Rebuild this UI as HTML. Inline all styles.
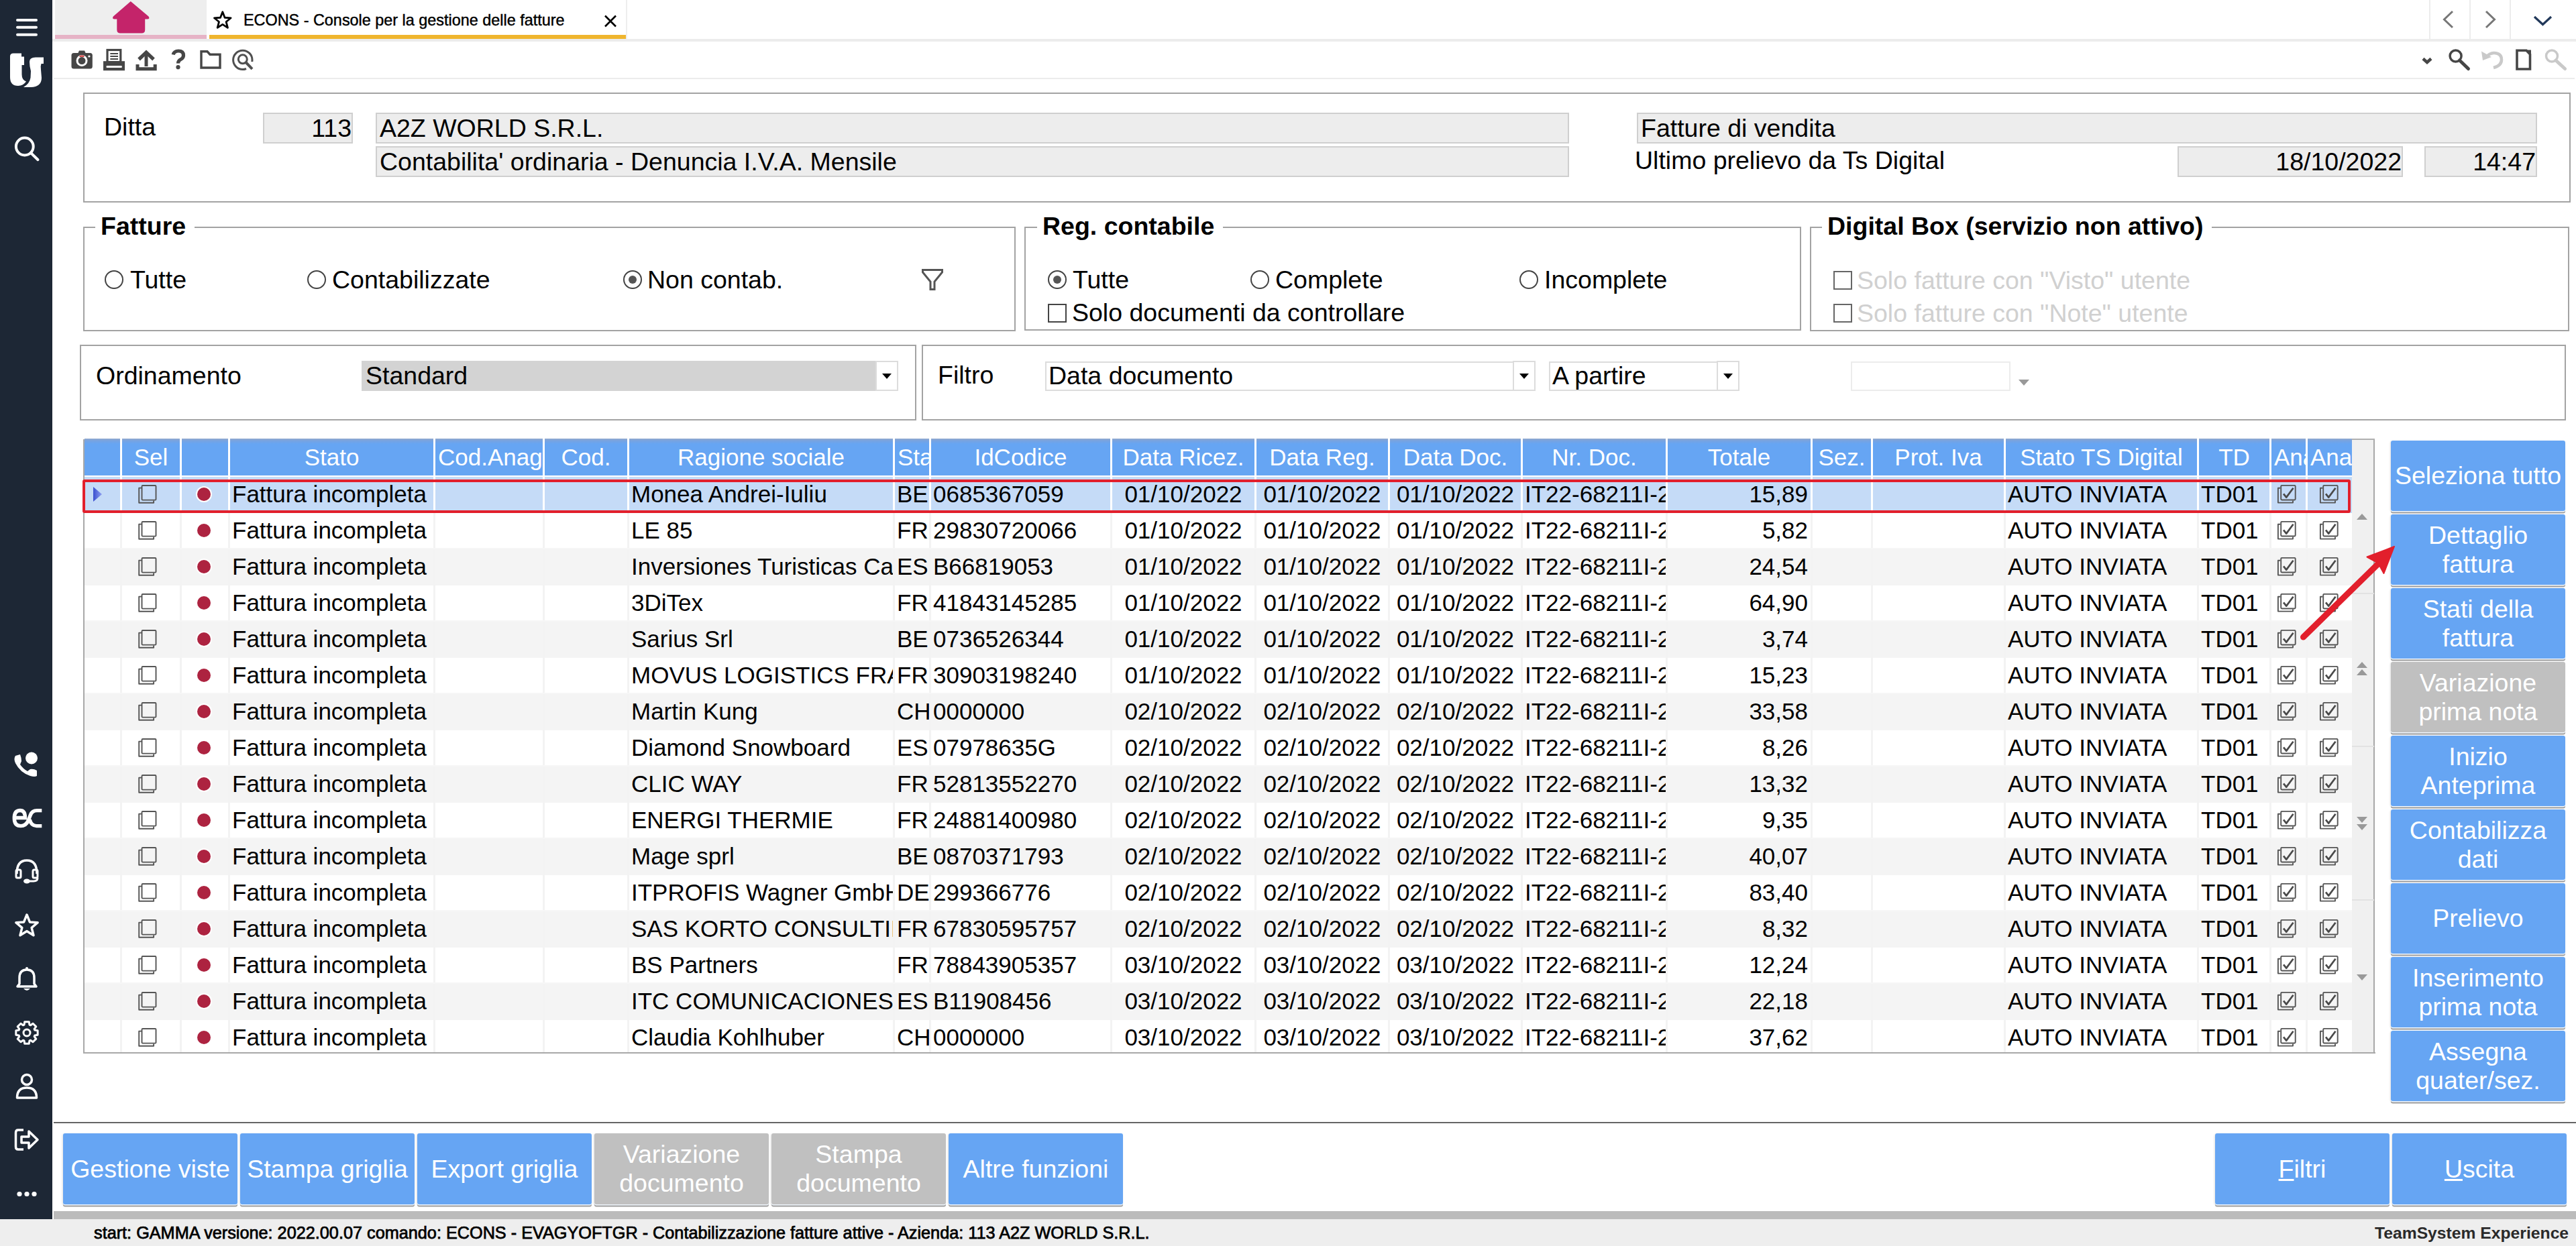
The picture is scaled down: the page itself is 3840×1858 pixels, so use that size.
<!DOCTYPE html><html><head><meta charset="utf-8"><style>
*{box-sizing:border-box;margin:0;padding:0}
html,body{width:3840px;height:1858px;overflow:hidden;background:#fff;font-family:"Liberation Sans", sans-serif;color:#000}
.a{position:absolute}
.t{position:absolute;white-space:nowrap;line-height:1}
.fld{position:absolute;background:#ededed;border:2px solid #cfcfcf;font-size:37.5px;line-height:42px;padding:0 4px;white-space:nowrap;overflow:hidden}
.box{position:absolute;border:2px solid #a3a3a3}
.lg{position:absolute;background:#fff;font-weight:bold;font-size:37.5px;line-height:1;padding:0 13px 0 8px;white-space:nowrap}
.rad{position:absolute;width:28px;height:28px;border:2px solid #444;border-radius:50%;background:#fff}
.rad.on::after{content:'';position:absolute;left:6px;top:6px;width:12px;height:12px;border-radius:50%;background:#555}
.chk{position:absolute;width:28px;height:28px;border:2px solid #444;background:#fff}
.lbl{position:absolute;font-size:37.5px;line-height:1;white-space:nowrap}
.hc{position:absolute;top:654px;height:55px;background:#66a5f3;color:#fff;font-size:35px;line-height:56px;text-align:center;white-space:nowrap;overflow:hidden;background-image:linear-gradient(#93a9cc,#78a3e0 3px,#66a5f3 8px)}
.row{position:absolute;left:126px;width:3380px;height:54px}
.c{position:absolute;top:0;height:54px;font-size:35px;line-height:51px;white-space:nowrap;overflow:hidden;padding-left:3px}
.btn{position:absolute;background:#66a5f3;color:#fff;border-radius:3px;font-size:37.5px;line-height:43px;text-align:center;display:flex;align-items:center;justify-content:center;box-shadow:0 1.5px 0 #f2f8ff,0 3.5px 0 #9d9d9d,-1px 1px 3px rgba(0,0,0,.12)}
.btn.g{background:#c0c0c0}
</style></head><body><div class="a" style="left:0;top:0;width:78px;height:1818px;background:#1d2735"></div>
<div class="a" style="left:78px;top:58px;width:3762px;height:4px;background:#ececec"></div>
<div class="a" style="left:82px;top:0;width:226px;height:52px;background:#eeeeee"></div>
<div class="a" style="left:82px;top:52px;width:226px;height:6px;background:#e6b3c6"></div>
<div class="a" style="left:312px;top:52px;width:621px;height:6px;background:#efb52e"></div>
<div class="t" style="left:363px;top:19px;font-size:23.4px;color:#000;-webkit-text-stroke:0.45px #000">ECONS - Console per la gestione delle fatture</div>
<div class="a" style="left:933px;top:0;width:2px;height:58px;background:#eeeeee"></div>
<div class="a" style="left:3621px;top:0;width:2px;height:58px;background:#ececec"></div>
<div class="a" style="left:3681px;top:0;width:2px;height:58px;background:#ececec"></div>
<div class="a" style="left:3741px;top:0;width:2px;height:58px;background:#ececec"></div>
<div class="a" style="left:80px;top:116px;width:3758px;height:2px;background:#ececec"></div>
<div class="box" style="left:124px;top:138px;width:3708px;height:164px"></div>
<div class="lbl" style="left:155px;top:171px">Ditta</div>
<div class="fld" style="left:392px;top:168px;width:134px;height:46px;text-align:right;padding-right:0">113</div>
<div class="fld" style="left:560px;top:168px;width:1779px;height:46px">A2Z WORLD S.R.L.</div>
<div class="fld" style="left:560px;top:218px;width:1779px;height:46px">Contabilita' ordinaria - Denuncia I.V.A. Mensile</div>
<div class="fld" style="left:2440px;top:168px;width:1342px;height:46px">Fatture di vendita</div>
<div class="lbl" style="left:2437px;top:221px">Ultimo prelievo da Ts Digital</div>
<div class="fld" style="left:3246px;top:218px;width:336px;height:46px;text-align:right;padding-right:0">18/10/2022</div>
<div class="fld" style="left:3614px;top:218px;width:168px;height:46px;text-align:right;padding-right:0">14:47</div>
<div class="box" style="left:124px;top:338px;width:1390px;height:156px"></div>
<div class="lg" style="left:142px;top:319px">Fatture</div>
<div class="box" style="left:1527px;top:338px;width:1158px;height:155px"></div>
<div class="lg" style="left:1546px;top:319px">Reg. contabile</div>
<div class="box" style="left:2698px;top:338px;width:1132px;height:156px"></div>
<div class="lg" style="left:2716px;top:319px">Digital Box (servizio non attivo)</div>
<div class="rad" style="left:156px;top:403px"></div>
<div class="lbl" style="left:194px;top:399px">Tutte</div>
<div class="rad" style="left:458px;top:403px"></div>
<div class="lbl" style="left:495px;top:399px">Contabilizzate</div>
<div class="rad on" style="left:929px;top:403px"></div>
<div class="lbl" style="left:965px;top:399px">Non contab.</div>
<div class="rad on" style="left:1562px;top:403px"></div>
<div class="lbl" style="left:1599px;top:399px">Tutte</div>
<div class="rad" style="left:1864px;top:403px"></div>
<div class="lbl" style="left:1901px;top:399px">Complete</div>
<div class="rad" style="left:2265px;top:403px"></div>
<div class="lbl" style="left:2302px;top:399px">Incomplete</div>
<div class="chk" style="left:1562px;top:453px"></div>
<div class="lbl" style="left:1598px;top:448px">Solo documenti da controllare</div>
<div class="chk" style="left:2733px;top:404px;border-color:#666"></div>
<div class="lbl" style="left:2768px;top:400px;color:#d0d0d0">Solo fatture con "Visto" utente</div>
<div class="chk" style="left:2733px;top:453px;border-color:#666"></div>
<div class="lbl" style="left:2768px;top:449px;color:#d0d0d0">Solo fatture con "Note" utente</div>
<svg class="a" style="left:1374px;top:401px" width="32" height="32" viewBox="0 0 32 32"><path d="M1.5 1.5 H30.5 V5 L19 19 V30.5 H13 V19 L1.5 5 Z" fill="#fff" stroke="#555" stroke-width="3" stroke-linejoin="miter"/></svg>
<div class="box" style="left:119px;top:514px;width:1247px;height:113px"></div>
<div class="lbl" style="left:143px;top:542px">Ordinamento</div>
<div class="a" style="left:539px;top:538px;width:767px;height:45px;background:#d3d3d3"></div>
<div class="lbl" style="left:545px;top:542px">Standard</div>
<div class="a" style="left:1305px;top:538px;width:34px;height:45px;background:#fff;border:2px solid #dcdcdc"></div>
<svg class="a" style="left:1315px;top:557px" width="14" height="8" viewBox="0 0 14 8"><path d="M0 0H14L7 8Z" fill="#000"/></svg>
<div class="box" style="left:1374px;top:514px;width:2451px;height:113px"></div>
<div class="lbl" style="left:1398px;top:541px">Filtro</div>
<div class="a" style="left:1558px;top:539px;width:699px;height:44px;background:#fff;border:2px solid #dcdcdc"></div>
<div class="lbl" style="left:1563px;top:542px">Data documento</div>
<div class="a" style="left:2255px;top:538px;width:34px;height:45px;background:#fff;border:2px solid #dcdcdc"></div>
<svg class="a" style="left:2265px;top:557px" width="14" height="8" viewBox="0 0 14 8"><path d="M0 0H14L7 8Z" fill="#000"/></svg>
<div class="a" style="left:2309px;top:539px;width:252px;height:44px;background:#fff;border:2px solid #dcdcdc"></div>
<div class="lbl" style="left:2314px;top:542px">A partire</div>
<div class="a" style="left:2559px;top:538px;width:34px;height:45px;background:#fff;border:2px solid #dcdcdc"></div>
<svg class="a" style="left:2569px;top:557px" width="14" height="8" viewBox="0 0 14 8"><path d="M0 0H14L7 8Z" fill="#000"/></svg>
<div class="a" style="left:2759px;top:539px;width:238px;height:44px;background:#fff;border:2px solid #ececec"></div>
<svg class="a" style="left:3009px;top:566px" width="16" height="9" viewBox="0 0 16 9"><path d="M0 0H16L8 9Z" fill="#999"/></svg>
<div class="a" style="left:126px;top:654px;width:3380px;height:55px;background:#fff"></div>
<div class="hc" style="left:126px;width:53px;"></div>
<div class="hc" style="left:182px;width:86px;">Sel</div>
<div class="hc" style="left:271px;width:69px;"></div>
<div class="hc" style="left:343px;width:303px;">Stato</div>
<div class="hc" style="left:649px;width:160px;text-align:left;padding-left:4px;">Cod.Anag</div>
<div class="hc" style="left:812px;width:123px;">Cod.</div>
<div class="hc" style="left:938px;width:393px;">Ragione sociale</div>
<div class="hc" style="left:1334px;width:51px;text-align:left;padding-left:4px;">Sta</div>
<div class="hc" style="left:1388px;width:267px;">IdCodice</div>
<div class="hc" style="left:1658px;width:212px;">Data Ricez.</div>
<div class="hc" style="left:1873px;width:196px;">Data Reg.</div>
<div class="hc" style="left:2072px;width:195px;">Data Doc.</div>
<div class="hc" style="left:2270px;width:213px;">Nr. Doc.</div>
<div class="hc" style="left:2486px;width:213px;">Totale</div>
<div class="hc" style="left:2702px;width:87px;">Sez.</div>
<div class="hc" style="left:2792px;width:195px;">Prot. Iva</div>
<div class="hc" style="left:2990px;width:285px;">Stato TS Digital</div>
<div class="hc" style="left:3278px;width:105px;">TD</div>
<div class="hc" style="left:3386px;width:51px;text-align:left;padding-left:4px;">Ana</div>
<div class="hc" style="left:3440px;width:66px;text-align:left;padding-left:4px;">Ana</div>
<div class="a" style="left:126px;top:711px;width:3380px;height:859px;overflow:hidden">
<div class="a" style="left:0;top:0px;width:3380px;height:54px;background:#c5dbf7">
<div class="a" style="left:53px;top:0;width:3px;height:54px;background:#fff"></div>
<div class="a" style="left:142px;top:0;width:3px;height:54px;background:#fff"></div>
<div class="a" style="left:214px;top:0;width:3px;height:54px;background:#fff"></div>
<div class="a" style="left:520px;top:0;width:3px;height:54px;background:#fff"></div>
<div class="a" style="left:683px;top:0;width:3px;height:54px;background:#fff"></div>
<div class="a" style="left:809px;top:0;width:3px;height:54px;background:#fff"></div>
<div class="a" style="left:1205px;top:0;width:3px;height:54px;background:#fff"></div>
<div class="a" style="left:1259px;top:0;width:3px;height:54px;background:#fff"></div>
<div class="a" style="left:1529px;top:0;width:3px;height:54px;background:#fff"></div>
<div class="a" style="left:1744px;top:0;width:3px;height:54px;background:#fff"></div>
<div class="a" style="left:1943px;top:0;width:3px;height:54px;background:#fff"></div>
<div class="a" style="left:2141px;top:0;width:3px;height:54px;background:#fff"></div>
<div class="a" style="left:2357px;top:0;width:3px;height:54px;background:#fff"></div>
<div class="a" style="left:2573px;top:0;width:3px;height:54px;background:#fff"></div>
<div class="a" style="left:2663px;top:0;width:3px;height:54px;background:#fff"></div>
<div class="a" style="left:2861px;top:0;width:3px;height:54px;background:#fff"></div>
<div class="a" style="left:3149px;top:0;width:3px;height:54px;background:#fff"></div>
<div class="a" style="left:3257px;top:0;width:3px;height:54px;background:#fff"></div>
<div class="a" style="left:3311px;top:0;width:3px;height:54px;background:#fff"></div>
<div class="c" style="left:217px;width:303px;">Fattura incompleta</div>
<div class="c" style="left:812px;width:393px;">Monea Andrei-Iuliu</div>
<div class="c" style="left:1208px;width:51px;">BE</div>
<div class="c" style="left:1262px;width:267px;">0685367059</div>
<div class="c" style="left:1532px;width:212px;text-align:center;padding-left:0;">01/10/2022</div>
<div class="c" style="left:1747px;width:196px;text-align:center;padding-left:0;">01/10/2022</div>
<div class="c" style="left:1946px;width:195px;text-align:center;padding-left:0;">01/10/2022</div>
<div class="c" style="left:2144px;width:213px;">IT22-68211I-2022</div>
<div class="c" style="left:2360px;width:213px;text-align:right;padding-right:4px;padding-left:0;">15,89</div>
<div class="c" style="left:2864px;width:285px;">AUTO INVIATA</div>
<div class="c" style="left:3152px;width:105px;">TD01</div>
<div class="a" style="left:80px;top:12px"><svg width="30" height="30" viewBox="0 0 30 30"><path d="M5.3 4.6 H1.2 V26.7 H23.1 V23.5" fill="none" stroke="#555" stroke-width="1.9" stroke-linejoin="round"/><rect x="5.5" y="1" width="21" height="21.6" rx="1.2" fill="none" stroke="#555" stroke-width="1.9"/></svg></div>
<div class="a" style="left:168px;top:16px;width:20px;height:20px;border-radius:50%;background:#ad2340;box-shadow:0 0 0 2px #fff"></div>
<div class="a" style="left:3268px;top:12px"><svg width="30" height="30" viewBox="0 0 30 30"><path d="M5.3 4.8 H1.9 V26.6 H24 V23.4" fill="none" stroke="#555" stroke-width="1.9" stroke-linejoin="round"/><rect x="6.2" y="0.9" width="21.5" height="21.6" rx="1.4" fill="none" stroke="#555" stroke-width="1.9"/><path d="M10 13.3 L14.2 18.6 L24.5 4.7" fill="none" stroke="#4a4a4a" stroke-width="2.7" stroke-linejoin="round"/></svg></div>
<div class="a" style="left:3331px;top:12px"><svg width="30" height="30" viewBox="0 0 30 30"><path d="M5.3 4.8 H1.9 V26.6 H24 V23.4" fill="none" stroke="#555" stroke-width="1.9" stroke-linejoin="round"/><rect x="6.2" y="0.9" width="21.5" height="21.6" rx="1.4" fill="none" stroke="#555" stroke-width="1.9"/><path d="M10 13.3 L14.2 18.6 L24.5 4.7" fill="none" stroke="#4a4a4a" stroke-width="2.7" stroke-linejoin="round"/></svg></div>
<svg class="a" style="left:13px;top:15px" width="14" height="22" viewBox="0 0 14 22"><defs><linearGradient id="tg" x1="0" x2="1"><stop offset="0" stop-color="#3a4fd0"/><stop offset="1" stop-color="#8fa0f0"/></linearGradient></defs><path d="M0 0 L13 11 L0 22Z" fill="url(#tg)"/></svg>
</div>
<div class="a" style="left:0;top:54px;width:3380px;height:54px;background:#fff">
<div class="a" style="left:53px;top:0;width:3px;height:54px;background:#f3f3f3"></div>
<div class="a" style="left:142px;top:0;width:3px;height:54px;background:#f3f3f3"></div>
<div class="a" style="left:214px;top:0;width:3px;height:54px;background:#f3f3f3"></div>
<div class="a" style="left:520px;top:0;width:3px;height:54px;background:#f3f3f3"></div>
<div class="a" style="left:683px;top:0;width:3px;height:54px;background:#f3f3f3"></div>
<div class="a" style="left:809px;top:0;width:3px;height:54px;background:#f3f3f3"></div>
<div class="a" style="left:1205px;top:0;width:3px;height:54px;background:#f3f3f3"></div>
<div class="a" style="left:1259px;top:0;width:3px;height:54px;background:#f3f3f3"></div>
<div class="a" style="left:1529px;top:0;width:3px;height:54px;background:#f3f3f3"></div>
<div class="a" style="left:1744px;top:0;width:3px;height:54px;background:#f3f3f3"></div>
<div class="a" style="left:1943px;top:0;width:3px;height:54px;background:#f3f3f3"></div>
<div class="a" style="left:2141px;top:0;width:3px;height:54px;background:#f3f3f3"></div>
<div class="a" style="left:2357px;top:0;width:3px;height:54px;background:#f3f3f3"></div>
<div class="a" style="left:2573px;top:0;width:3px;height:54px;background:#f3f3f3"></div>
<div class="a" style="left:2663px;top:0;width:3px;height:54px;background:#f3f3f3"></div>
<div class="a" style="left:2861px;top:0;width:3px;height:54px;background:#f3f3f3"></div>
<div class="a" style="left:3149px;top:0;width:3px;height:54px;background:#f3f3f3"></div>
<div class="a" style="left:3257px;top:0;width:3px;height:54px;background:#f3f3f3"></div>
<div class="a" style="left:3311px;top:0;width:3px;height:54px;background:#f3f3f3"></div>
<div class="a" style="left:0;top:52px;width:3380px;height:2px;background:#f6f6f6"></div>
<div class="c" style="left:217px;width:303px;">Fattura incompleta</div>
<div class="c" style="left:812px;width:393px;">LE 85</div>
<div class="c" style="left:1208px;width:51px;">FR</div>
<div class="c" style="left:1262px;width:267px;">29830720066</div>
<div class="c" style="left:1532px;width:212px;text-align:center;padding-left:0;">01/10/2022</div>
<div class="c" style="left:1747px;width:196px;text-align:center;padding-left:0;">01/10/2022</div>
<div class="c" style="left:1946px;width:195px;text-align:center;padding-left:0;">01/10/2022</div>
<div class="c" style="left:2144px;width:213px;">IT22-68211I-2022</div>
<div class="c" style="left:2360px;width:213px;text-align:right;padding-right:4px;padding-left:0;">5,82</div>
<div class="c" style="left:2864px;width:285px;">AUTO INVIATA</div>
<div class="c" style="left:3152px;width:105px;">TD01</div>
<div class="a" style="left:80px;top:12px"><svg width="30" height="30" viewBox="0 0 30 30"><path d="M5.3 4.6 H1.2 V26.7 H23.1 V23.5" fill="none" stroke="#555" stroke-width="1.9" stroke-linejoin="round"/><rect x="5.5" y="1" width="21" height="21.6" rx="1.2" fill="none" stroke="#555" stroke-width="1.9"/></svg></div>
<div class="a" style="left:168px;top:16px;width:20px;height:20px;border-radius:50%;background:#ad2340;box-shadow:0 0 0 2px #fff"></div>
<div class="a" style="left:3268px;top:12px"><svg width="30" height="30" viewBox="0 0 30 30"><path d="M5.3 4.8 H1.9 V26.6 H24 V23.4" fill="none" stroke="#555" stroke-width="1.9" stroke-linejoin="round"/><rect x="6.2" y="0.9" width="21.5" height="21.6" rx="1.4" fill="none" stroke="#555" stroke-width="1.9"/><path d="M10 13.3 L14.2 18.6 L24.5 4.7" fill="none" stroke="#4a4a4a" stroke-width="2.7" stroke-linejoin="round"/></svg></div>
<div class="a" style="left:3331px;top:12px"><svg width="30" height="30" viewBox="0 0 30 30"><path d="M5.3 4.8 H1.9 V26.6 H24 V23.4" fill="none" stroke="#555" stroke-width="1.9" stroke-linejoin="round"/><rect x="6.2" y="0.9" width="21.5" height="21.6" rx="1.4" fill="none" stroke="#555" stroke-width="1.9"/><path d="M10 13.3 L14.2 18.6 L24.5 4.7" fill="none" stroke="#4a4a4a" stroke-width="2.7" stroke-linejoin="round"/></svg></div>
</div>
<div class="a" style="left:0;top:108px;width:3380px;height:54px;background:#f4f4f4">
<div class="a" style="left:53px;top:0;width:3px;height:54px;background:#f3f3f3"></div>
<div class="a" style="left:142px;top:0;width:3px;height:54px;background:#f3f3f3"></div>
<div class="a" style="left:214px;top:0;width:3px;height:54px;background:#f3f3f3"></div>
<div class="a" style="left:520px;top:0;width:3px;height:54px;background:#f3f3f3"></div>
<div class="a" style="left:683px;top:0;width:3px;height:54px;background:#f3f3f3"></div>
<div class="a" style="left:809px;top:0;width:3px;height:54px;background:#f3f3f3"></div>
<div class="a" style="left:1205px;top:0;width:3px;height:54px;background:#f3f3f3"></div>
<div class="a" style="left:1259px;top:0;width:3px;height:54px;background:#f3f3f3"></div>
<div class="a" style="left:1529px;top:0;width:3px;height:54px;background:#f3f3f3"></div>
<div class="a" style="left:1744px;top:0;width:3px;height:54px;background:#f3f3f3"></div>
<div class="a" style="left:1943px;top:0;width:3px;height:54px;background:#f3f3f3"></div>
<div class="a" style="left:2141px;top:0;width:3px;height:54px;background:#f3f3f3"></div>
<div class="a" style="left:2357px;top:0;width:3px;height:54px;background:#f3f3f3"></div>
<div class="a" style="left:2573px;top:0;width:3px;height:54px;background:#f3f3f3"></div>
<div class="a" style="left:2663px;top:0;width:3px;height:54px;background:#f3f3f3"></div>
<div class="a" style="left:2861px;top:0;width:3px;height:54px;background:#f3f3f3"></div>
<div class="a" style="left:3149px;top:0;width:3px;height:54px;background:#f3f3f3"></div>
<div class="a" style="left:3257px;top:0;width:3px;height:54px;background:#f3f3f3"></div>
<div class="a" style="left:3311px;top:0;width:3px;height:54px;background:#f3f3f3"></div>
<div class="c" style="left:217px;width:303px;">Fattura incompleta</div>
<div class="c" style="left:812px;width:393px;">Inversiones Turisticas Canarias</div>
<div class="c" style="left:1208px;width:51px;">ES</div>
<div class="c" style="left:1262px;width:267px;">B66819053</div>
<div class="c" style="left:1532px;width:212px;text-align:center;padding-left:0;">01/10/2022</div>
<div class="c" style="left:1747px;width:196px;text-align:center;padding-left:0;">01/10/2022</div>
<div class="c" style="left:1946px;width:195px;text-align:center;padding-left:0;">01/10/2022</div>
<div class="c" style="left:2144px;width:213px;">IT22-68211I-2022</div>
<div class="c" style="left:2360px;width:213px;text-align:right;padding-right:4px;padding-left:0;">24,54</div>
<div class="c" style="left:2864px;width:285px;">AUTO INVIATA</div>
<div class="c" style="left:3152px;width:105px;">TD01</div>
<div class="a" style="left:80px;top:12px"><svg width="30" height="30" viewBox="0 0 30 30"><path d="M5.3 4.6 H1.2 V26.7 H23.1 V23.5" fill="none" stroke="#555" stroke-width="1.9" stroke-linejoin="round"/><rect x="5.5" y="1" width="21" height="21.6" rx="1.2" fill="none" stroke="#555" stroke-width="1.9"/></svg></div>
<div class="a" style="left:168px;top:16px;width:20px;height:20px;border-radius:50%;background:#ad2340;box-shadow:0 0 0 2px #fff"></div>
<div class="a" style="left:3268px;top:12px"><svg width="30" height="30" viewBox="0 0 30 30"><path d="M5.3 4.8 H1.9 V26.6 H24 V23.4" fill="none" stroke="#555" stroke-width="1.9" stroke-linejoin="round"/><rect x="6.2" y="0.9" width="21.5" height="21.6" rx="1.4" fill="none" stroke="#555" stroke-width="1.9"/><path d="M10 13.3 L14.2 18.6 L24.5 4.7" fill="none" stroke="#4a4a4a" stroke-width="2.7" stroke-linejoin="round"/></svg></div>
<div class="a" style="left:3331px;top:12px"><svg width="30" height="30" viewBox="0 0 30 30"><path d="M5.3 4.8 H1.9 V26.6 H24 V23.4" fill="none" stroke="#555" stroke-width="1.9" stroke-linejoin="round"/><rect x="6.2" y="0.9" width="21.5" height="21.6" rx="1.4" fill="none" stroke="#555" stroke-width="1.9"/><path d="M10 13.3 L14.2 18.6 L24.5 4.7" fill="none" stroke="#4a4a4a" stroke-width="2.7" stroke-linejoin="round"/></svg></div>
</div>
<div class="a" style="left:0;top:162px;width:3380px;height:54px;background:#fff">
<div class="a" style="left:53px;top:0;width:3px;height:54px;background:#f3f3f3"></div>
<div class="a" style="left:142px;top:0;width:3px;height:54px;background:#f3f3f3"></div>
<div class="a" style="left:214px;top:0;width:3px;height:54px;background:#f3f3f3"></div>
<div class="a" style="left:520px;top:0;width:3px;height:54px;background:#f3f3f3"></div>
<div class="a" style="left:683px;top:0;width:3px;height:54px;background:#f3f3f3"></div>
<div class="a" style="left:809px;top:0;width:3px;height:54px;background:#f3f3f3"></div>
<div class="a" style="left:1205px;top:0;width:3px;height:54px;background:#f3f3f3"></div>
<div class="a" style="left:1259px;top:0;width:3px;height:54px;background:#f3f3f3"></div>
<div class="a" style="left:1529px;top:0;width:3px;height:54px;background:#f3f3f3"></div>
<div class="a" style="left:1744px;top:0;width:3px;height:54px;background:#f3f3f3"></div>
<div class="a" style="left:1943px;top:0;width:3px;height:54px;background:#f3f3f3"></div>
<div class="a" style="left:2141px;top:0;width:3px;height:54px;background:#f3f3f3"></div>
<div class="a" style="left:2357px;top:0;width:3px;height:54px;background:#f3f3f3"></div>
<div class="a" style="left:2573px;top:0;width:3px;height:54px;background:#f3f3f3"></div>
<div class="a" style="left:2663px;top:0;width:3px;height:54px;background:#f3f3f3"></div>
<div class="a" style="left:2861px;top:0;width:3px;height:54px;background:#f3f3f3"></div>
<div class="a" style="left:3149px;top:0;width:3px;height:54px;background:#f3f3f3"></div>
<div class="a" style="left:3257px;top:0;width:3px;height:54px;background:#f3f3f3"></div>
<div class="a" style="left:3311px;top:0;width:3px;height:54px;background:#f3f3f3"></div>
<div class="a" style="left:0;top:52px;width:3380px;height:2px;background:#f6f6f6"></div>
<div class="c" style="left:217px;width:303px;">Fattura incompleta</div>
<div class="c" style="left:812px;width:393px;">3DiTex</div>
<div class="c" style="left:1208px;width:51px;">FR</div>
<div class="c" style="left:1262px;width:267px;">41843145285</div>
<div class="c" style="left:1532px;width:212px;text-align:center;padding-left:0;">01/10/2022</div>
<div class="c" style="left:1747px;width:196px;text-align:center;padding-left:0;">01/10/2022</div>
<div class="c" style="left:1946px;width:195px;text-align:center;padding-left:0;">01/10/2022</div>
<div class="c" style="left:2144px;width:213px;">IT22-68211I-2022</div>
<div class="c" style="left:2360px;width:213px;text-align:right;padding-right:4px;padding-left:0;">64,90</div>
<div class="c" style="left:2864px;width:285px;">AUTO INVIATA</div>
<div class="c" style="left:3152px;width:105px;">TD01</div>
<div class="a" style="left:80px;top:12px"><svg width="30" height="30" viewBox="0 0 30 30"><path d="M5.3 4.6 H1.2 V26.7 H23.1 V23.5" fill="none" stroke="#555" stroke-width="1.9" stroke-linejoin="round"/><rect x="5.5" y="1" width="21" height="21.6" rx="1.2" fill="none" stroke="#555" stroke-width="1.9"/></svg></div>
<div class="a" style="left:168px;top:16px;width:20px;height:20px;border-radius:50%;background:#ad2340;box-shadow:0 0 0 2px #fff"></div>
<div class="a" style="left:3268px;top:12px"><svg width="30" height="30" viewBox="0 0 30 30"><path d="M5.3 4.8 H1.9 V26.6 H24 V23.4" fill="none" stroke="#555" stroke-width="1.9" stroke-linejoin="round"/><rect x="6.2" y="0.9" width="21.5" height="21.6" rx="1.4" fill="none" stroke="#555" stroke-width="1.9"/><path d="M10 13.3 L14.2 18.6 L24.5 4.7" fill="none" stroke="#4a4a4a" stroke-width="2.7" stroke-linejoin="round"/></svg></div>
<div class="a" style="left:3331px;top:12px"><svg width="30" height="30" viewBox="0 0 30 30"><path d="M5.3 4.8 H1.9 V26.6 H24 V23.4" fill="none" stroke="#555" stroke-width="1.9" stroke-linejoin="round"/><rect x="6.2" y="0.9" width="21.5" height="21.6" rx="1.4" fill="none" stroke="#555" stroke-width="1.9"/><path d="M10 13.3 L14.2 18.6 L24.5 4.7" fill="none" stroke="#4a4a4a" stroke-width="2.7" stroke-linejoin="round"/></svg></div>
</div>
<div class="a" style="left:0;top:216px;width:3380px;height:54px;background:#f4f4f4">
<div class="a" style="left:53px;top:0;width:3px;height:54px;background:#f3f3f3"></div>
<div class="a" style="left:142px;top:0;width:3px;height:54px;background:#f3f3f3"></div>
<div class="a" style="left:214px;top:0;width:3px;height:54px;background:#f3f3f3"></div>
<div class="a" style="left:520px;top:0;width:3px;height:54px;background:#f3f3f3"></div>
<div class="a" style="left:683px;top:0;width:3px;height:54px;background:#f3f3f3"></div>
<div class="a" style="left:809px;top:0;width:3px;height:54px;background:#f3f3f3"></div>
<div class="a" style="left:1205px;top:0;width:3px;height:54px;background:#f3f3f3"></div>
<div class="a" style="left:1259px;top:0;width:3px;height:54px;background:#f3f3f3"></div>
<div class="a" style="left:1529px;top:0;width:3px;height:54px;background:#f3f3f3"></div>
<div class="a" style="left:1744px;top:0;width:3px;height:54px;background:#f3f3f3"></div>
<div class="a" style="left:1943px;top:0;width:3px;height:54px;background:#f3f3f3"></div>
<div class="a" style="left:2141px;top:0;width:3px;height:54px;background:#f3f3f3"></div>
<div class="a" style="left:2357px;top:0;width:3px;height:54px;background:#f3f3f3"></div>
<div class="a" style="left:2573px;top:0;width:3px;height:54px;background:#f3f3f3"></div>
<div class="a" style="left:2663px;top:0;width:3px;height:54px;background:#f3f3f3"></div>
<div class="a" style="left:2861px;top:0;width:3px;height:54px;background:#f3f3f3"></div>
<div class="a" style="left:3149px;top:0;width:3px;height:54px;background:#f3f3f3"></div>
<div class="a" style="left:3257px;top:0;width:3px;height:54px;background:#f3f3f3"></div>
<div class="a" style="left:3311px;top:0;width:3px;height:54px;background:#f3f3f3"></div>
<div class="c" style="left:217px;width:303px;">Fattura incompleta</div>
<div class="c" style="left:812px;width:393px;">Sarius Srl</div>
<div class="c" style="left:1208px;width:51px;">BE</div>
<div class="c" style="left:1262px;width:267px;">0736526344</div>
<div class="c" style="left:1532px;width:212px;text-align:center;padding-left:0;">01/10/2022</div>
<div class="c" style="left:1747px;width:196px;text-align:center;padding-left:0;">01/10/2022</div>
<div class="c" style="left:1946px;width:195px;text-align:center;padding-left:0;">01/10/2022</div>
<div class="c" style="left:2144px;width:213px;">IT22-68211I-2022</div>
<div class="c" style="left:2360px;width:213px;text-align:right;padding-right:4px;padding-left:0;">3,74</div>
<div class="c" style="left:2864px;width:285px;">AUTO INVIATA</div>
<div class="c" style="left:3152px;width:105px;">TD01</div>
<div class="a" style="left:80px;top:12px"><svg width="30" height="30" viewBox="0 0 30 30"><path d="M5.3 4.6 H1.2 V26.7 H23.1 V23.5" fill="none" stroke="#555" stroke-width="1.9" stroke-linejoin="round"/><rect x="5.5" y="1" width="21" height="21.6" rx="1.2" fill="none" stroke="#555" stroke-width="1.9"/></svg></div>
<div class="a" style="left:168px;top:16px;width:20px;height:20px;border-radius:50%;background:#ad2340;box-shadow:0 0 0 2px #fff"></div>
<div class="a" style="left:3268px;top:12px"><svg width="30" height="30" viewBox="0 0 30 30"><path d="M5.3 4.8 H1.9 V26.6 H24 V23.4" fill="none" stroke="#555" stroke-width="1.9" stroke-linejoin="round"/><rect x="6.2" y="0.9" width="21.5" height="21.6" rx="1.4" fill="none" stroke="#555" stroke-width="1.9"/><path d="M10 13.3 L14.2 18.6 L24.5 4.7" fill="none" stroke="#4a4a4a" stroke-width="2.7" stroke-linejoin="round"/></svg></div>
<div class="a" style="left:3331px;top:12px"><svg width="30" height="30" viewBox="0 0 30 30"><path d="M5.3 4.8 H1.9 V26.6 H24 V23.4" fill="none" stroke="#555" stroke-width="1.9" stroke-linejoin="round"/><rect x="6.2" y="0.9" width="21.5" height="21.6" rx="1.4" fill="none" stroke="#555" stroke-width="1.9"/><path d="M10 13.3 L14.2 18.6 L24.5 4.7" fill="none" stroke="#4a4a4a" stroke-width="2.7" stroke-linejoin="round"/></svg></div>
</div>
<div class="a" style="left:0;top:270px;width:3380px;height:54px;background:#fff">
<div class="a" style="left:53px;top:0;width:3px;height:54px;background:#f3f3f3"></div>
<div class="a" style="left:142px;top:0;width:3px;height:54px;background:#f3f3f3"></div>
<div class="a" style="left:214px;top:0;width:3px;height:54px;background:#f3f3f3"></div>
<div class="a" style="left:520px;top:0;width:3px;height:54px;background:#f3f3f3"></div>
<div class="a" style="left:683px;top:0;width:3px;height:54px;background:#f3f3f3"></div>
<div class="a" style="left:809px;top:0;width:3px;height:54px;background:#f3f3f3"></div>
<div class="a" style="left:1205px;top:0;width:3px;height:54px;background:#f3f3f3"></div>
<div class="a" style="left:1259px;top:0;width:3px;height:54px;background:#f3f3f3"></div>
<div class="a" style="left:1529px;top:0;width:3px;height:54px;background:#f3f3f3"></div>
<div class="a" style="left:1744px;top:0;width:3px;height:54px;background:#f3f3f3"></div>
<div class="a" style="left:1943px;top:0;width:3px;height:54px;background:#f3f3f3"></div>
<div class="a" style="left:2141px;top:0;width:3px;height:54px;background:#f3f3f3"></div>
<div class="a" style="left:2357px;top:0;width:3px;height:54px;background:#f3f3f3"></div>
<div class="a" style="left:2573px;top:0;width:3px;height:54px;background:#f3f3f3"></div>
<div class="a" style="left:2663px;top:0;width:3px;height:54px;background:#f3f3f3"></div>
<div class="a" style="left:2861px;top:0;width:3px;height:54px;background:#f3f3f3"></div>
<div class="a" style="left:3149px;top:0;width:3px;height:54px;background:#f3f3f3"></div>
<div class="a" style="left:3257px;top:0;width:3px;height:54px;background:#f3f3f3"></div>
<div class="a" style="left:3311px;top:0;width:3px;height:54px;background:#f3f3f3"></div>
<div class="a" style="left:0;top:52px;width:3380px;height:2px;background:#f6f6f6"></div>
<div class="c" style="left:217px;width:303px;">Fattura incompleta</div>
<div class="c" style="left:812px;width:393px;">MOVUS LOGISTICS FRANCE</div>
<div class="c" style="left:1208px;width:51px;">FR</div>
<div class="c" style="left:1262px;width:267px;">30903198240</div>
<div class="c" style="left:1532px;width:212px;text-align:center;padding-left:0;">01/10/2022</div>
<div class="c" style="left:1747px;width:196px;text-align:center;padding-left:0;">01/10/2022</div>
<div class="c" style="left:1946px;width:195px;text-align:center;padding-left:0;">01/10/2022</div>
<div class="c" style="left:2144px;width:213px;">IT22-68211I-2022</div>
<div class="c" style="left:2360px;width:213px;text-align:right;padding-right:4px;padding-left:0;">15,23</div>
<div class="c" style="left:2864px;width:285px;">AUTO INVIATA</div>
<div class="c" style="left:3152px;width:105px;">TD01</div>
<div class="a" style="left:80px;top:12px"><svg width="30" height="30" viewBox="0 0 30 30"><path d="M5.3 4.6 H1.2 V26.7 H23.1 V23.5" fill="none" stroke="#555" stroke-width="1.9" stroke-linejoin="round"/><rect x="5.5" y="1" width="21" height="21.6" rx="1.2" fill="none" stroke="#555" stroke-width="1.9"/></svg></div>
<div class="a" style="left:168px;top:16px;width:20px;height:20px;border-radius:50%;background:#ad2340;box-shadow:0 0 0 2px #fff"></div>
<div class="a" style="left:3268px;top:12px"><svg width="30" height="30" viewBox="0 0 30 30"><path d="M5.3 4.8 H1.9 V26.6 H24 V23.4" fill="none" stroke="#555" stroke-width="1.9" stroke-linejoin="round"/><rect x="6.2" y="0.9" width="21.5" height="21.6" rx="1.4" fill="none" stroke="#555" stroke-width="1.9"/><path d="M10 13.3 L14.2 18.6 L24.5 4.7" fill="none" stroke="#4a4a4a" stroke-width="2.7" stroke-linejoin="round"/></svg></div>
<div class="a" style="left:3331px;top:12px"><svg width="30" height="30" viewBox="0 0 30 30"><path d="M5.3 4.8 H1.9 V26.6 H24 V23.4" fill="none" stroke="#555" stroke-width="1.9" stroke-linejoin="round"/><rect x="6.2" y="0.9" width="21.5" height="21.6" rx="1.4" fill="none" stroke="#555" stroke-width="1.9"/><path d="M10 13.3 L14.2 18.6 L24.5 4.7" fill="none" stroke="#4a4a4a" stroke-width="2.7" stroke-linejoin="round"/></svg></div>
</div>
<div class="a" style="left:0;top:324px;width:3380px;height:54px;background:#f4f4f4">
<div class="a" style="left:53px;top:0;width:3px;height:54px;background:#f3f3f3"></div>
<div class="a" style="left:142px;top:0;width:3px;height:54px;background:#f3f3f3"></div>
<div class="a" style="left:214px;top:0;width:3px;height:54px;background:#f3f3f3"></div>
<div class="a" style="left:520px;top:0;width:3px;height:54px;background:#f3f3f3"></div>
<div class="a" style="left:683px;top:0;width:3px;height:54px;background:#f3f3f3"></div>
<div class="a" style="left:809px;top:0;width:3px;height:54px;background:#f3f3f3"></div>
<div class="a" style="left:1205px;top:0;width:3px;height:54px;background:#f3f3f3"></div>
<div class="a" style="left:1259px;top:0;width:3px;height:54px;background:#f3f3f3"></div>
<div class="a" style="left:1529px;top:0;width:3px;height:54px;background:#f3f3f3"></div>
<div class="a" style="left:1744px;top:0;width:3px;height:54px;background:#f3f3f3"></div>
<div class="a" style="left:1943px;top:0;width:3px;height:54px;background:#f3f3f3"></div>
<div class="a" style="left:2141px;top:0;width:3px;height:54px;background:#f3f3f3"></div>
<div class="a" style="left:2357px;top:0;width:3px;height:54px;background:#f3f3f3"></div>
<div class="a" style="left:2573px;top:0;width:3px;height:54px;background:#f3f3f3"></div>
<div class="a" style="left:2663px;top:0;width:3px;height:54px;background:#f3f3f3"></div>
<div class="a" style="left:2861px;top:0;width:3px;height:54px;background:#f3f3f3"></div>
<div class="a" style="left:3149px;top:0;width:3px;height:54px;background:#f3f3f3"></div>
<div class="a" style="left:3257px;top:0;width:3px;height:54px;background:#f3f3f3"></div>
<div class="a" style="left:3311px;top:0;width:3px;height:54px;background:#f3f3f3"></div>
<div class="c" style="left:217px;width:303px;">Fattura incompleta</div>
<div class="c" style="left:812px;width:393px;">Martin Kung</div>
<div class="c" style="left:1208px;width:51px;">CH</div>
<div class="c" style="left:1262px;width:267px;">0000000</div>
<div class="c" style="left:1532px;width:212px;text-align:center;padding-left:0;">02/10/2022</div>
<div class="c" style="left:1747px;width:196px;text-align:center;padding-left:0;">02/10/2022</div>
<div class="c" style="left:1946px;width:195px;text-align:center;padding-left:0;">02/10/2022</div>
<div class="c" style="left:2144px;width:213px;">IT22-68211I-2022</div>
<div class="c" style="left:2360px;width:213px;text-align:right;padding-right:4px;padding-left:0;">33,58</div>
<div class="c" style="left:2864px;width:285px;">AUTO INVIATA</div>
<div class="c" style="left:3152px;width:105px;">TD01</div>
<div class="a" style="left:80px;top:12px"><svg width="30" height="30" viewBox="0 0 30 30"><path d="M5.3 4.6 H1.2 V26.7 H23.1 V23.5" fill="none" stroke="#555" stroke-width="1.9" stroke-linejoin="round"/><rect x="5.5" y="1" width="21" height="21.6" rx="1.2" fill="none" stroke="#555" stroke-width="1.9"/></svg></div>
<div class="a" style="left:168px;top:16px;width:20px;height:20px;border-radius:50%;background:#ad2340;box-shadow:0 0 0 2px #fff"></div>
<div class="a" style="left:3268px;top:12px"><svg width="30" height="30" viewBox="0 0 30 30"><path d="M5.3 4.8 H1.9 V26.6 H24 V23.4" fill="none" stroke="#555" stroke-width="1.9" stroke-linejoin="round"/><rect x="6.2" y="0.9" width="21.5" height="21.6" rx="1.4" fill="none" stroke="#555" stroke-width="1.9"/><path d="M10 13.3 L14.2 18.6 L24.5 4.7" fill="none" stroke="#4a4a4a" stroke-width="2.7" stroke-linejoin="round"/></svg></div>
<div class="a" style="left:3331px;top:12px"><svg width="30" height="30" viewBox="0 0 30 30"><path d="M5.3 4.8 H1.9 V26.6 H24 V23.4" fill="none" stroke="#555" stroke-width="1.9" stroke-linejoin="round"/><rect x="6.2" y="0.9" width="21.5" height="21.6" rx="1.4" fill="none" stroke="#555" stroke-width="1.9"/><path d="M10 13.3 L14.2 18.6 L24.5 4.7" fill="none" stroke="#4a4a4a" stroke-width="2.7" stroke-linejoin="round"/></svg></div>
</div>
<div class="a" style="left:0;top:378px;width:3380px;height:54px;background:#fff">
<div class="a" style="left:53px;top:0;width:3px;height:54px;background:#f3f3f3"></div>
<div class="a" style="left:142px;top:0;width:3px;height:54px;background:#f3f3f3"></div>
<div class="a" style="left:214px;top:0;width:3px;height:54px;background:#f3f3f3"></div>
<div class="a" style="left:520px;top:0;width:3px;height:54px;background:#f3f3f3"></div>
<div class="a" style="left:683px;top:0;width:3px;height:54px;background:#f3f3f3"></div>
<div class="a" style="left:809px;top:0;width:3px;height:54px;background:#f3f3f3"></div>
<div class="a" style="left:1205px;top:0;width:3px;height:54px;background:#f3f3f3"></div>
<div class="a" style="left:1259px;top:0;width:3px;height:54px;background:#f3f3f3"></div>
<div class="a" style="left:1529px;top:0;width:3px;height:54px;background:#f3f3f3"></div>
<div class="a" style="left:1744px;top:0;width:3px;height:54px;background:#f3f3f3"></div>
<div class="a" style="left:1943px;top:0;width:3px;height:54px;background:#f3f3f3"></div>
<div class="a" style="left:2141px;top:0;width:3px;height:54px;background:#f3f3f3"></div>
<div class="a" style="left:2357px;top:0;width:3px;height:54px;background:#f3f3f3"></div>
<div class="a" style="left:2573px;top:0;width:3px;height:54px;background:#f3f3f3"></div>
<div class="a" style="left:2663px;top:0;width:3px;height:54px;background:#f3f3f3"></div>
<div class="a" style="left:2861px;top:0;width:3px;height:54px;background:#f3f3f3"></div>
<div class="a" style="left:3149px;top:0;width:3px;height:54px;background:#f3f3f3"></div>
<div class="a" style="left:3257px;top:0;width:3px;height:54px;background:#f3f3f3"></div>
<div class="a" style="left:3311px;top:0;width:3px;height:54px;background:#f3f3f3"></div>
<div class="a" style="left:0;top:52px;width:3380px;height:2px;background:#f6f6f6"></div>
<div class="c" style="left:217px;width:303px;">Fattura incompleta</div>
<div class="c" style="left:812px;width:393px;">Diamond Snowboard</div>
<div class="c" style="left:1208px;width:51px;">ES</div>
<div class="c" style="left:1262px;width:267px;">07978635G</div>
<div class="c" style="left:1532px;width:212px;text-align:center;padding-left:0;">02/10/2022</div>
<div class="c" style="left:1747px;width:196px;text-align:center;padding-left:0;">02/10/2022</div>
<div class="c" style="left:1946px;width:195px;text-align:center;padding-left:0;">02/10/2022</div>
<div class="c" style="left:2144px;width:213px;">IT22-68211I-2022</div>
<div class="c" style="left:2360px;width:213px;text-align:right;padding-right:4px;padding-left:0;">8,26</div>
<div class="c" style="left:2864px;width:285px;">AUTO INVIATA</div>
<div class="c" style="left:3152px;width:105px;">TD01</div>
<div class="a" style="left:80px;top:12px"><svg width="30" height="30" viewBox="0 0 30 30"><path d="M5.3 4.6 H1.2 V26.7 H23.1 V23.5" fill="none" stroke="#555" stroke-width="1.9" stroke-linejoin="round"/><rect x="5.5" y="1" width="21" height="21.6" rx="1.2" fill="none" stroke="#555" stroke-width="1.9"/></svg></div>
<div class="a" style="left:168px;top:16px;width:20px;height:20px;border-radius:50%;background:#ad2340;box-shadow:0 0 0 2px #fff"></div>
<div class="a" style="left:3268px;top:12px"><svg width="30" height="30" viewBox="0 0 30 30"><path d="M5.3 4.8 H1.9 V26.6 H24 V23.4" fill="none" stroke="#555" stroke-width="1.9" stroke-linejoin="round"/><rect x="6.2" y="0.9" width="21.5" height="21.6" rx="1.4" fill="none" stroke="#555" stroke-width="1.9"/><path d="M10 13.3 L14.2 18.6 L24.5 4.7" fill="none" stroke="#4a4a4a" stroke-width="2.7" stroke-linejoin="round"/></svg></div>
<div class="a" style="left:3331px;top:12px"><svg width="30" height="30" viewBox="0 0 30 30"><path d="M5.3 4.8 H1.9 V26.6 H24 V23.4" fill="none" stroke="#555" stroke-width="1.9" stroke-linejoin="round"/><rect x="6.2" y="0.9" width="21.5" height="21.6" rx="1.4" fill="none" stroke="#555" stroke-width="1.9"/><path d="M10 13.3 L14.2 18.6 L24.5 4.7" fill="none" stroke="#4a4a4a" stroke-width="2.7" stroke-linejoin="round"/></svg></div>
</div>
<div class="a" style="left:0;top:432px;width:3380px;height:54px;background:#f4f4f4">
<div class="a" style="left:53px;top:0;width:3px;height:54px;background:#f3f3f3"></div>
<div class="a" style="left:142px;top:0;width:3px;height:54px;background:#f3f3f3"></div>
<div class="a" style="left:214px;top:0;width:3px;height:54px;background:#f3f3f3"></div>
<div class="a" style="left:520px;top:0;width:3px;height:54px;background:#f3f3f3"></div>
<div class="a" style="left:683px;top:0;width:3px;height:54px;background:#f3f3f3"></div>
<div class="a" style="left:809px;top:0;width:3px;height:54px;background:#f3f3f3"></div>
<div class="a" style="left:1205px;top:0;width:3px;height:54px;background:#f3f3f3"></div>
<div class="a" style="left:1259px;top:0;width:3px;height:54px;background:#f3f3f3"></div>
<div class="a" style="left:1529px;top:0;width:3px;height:54px;background:#f3f3f3"></div>
<div class="a" style="left:1744px;top:0;width:3px;height:54px;background:#f3f3f3"></div>
<div class="a" style="left:1943px;top:0;width:3px;height:54px;background:#f3f3f3"></div>
<div class="a" style="left:2141px;top:0;width:3px;height:54px;background:#f3f3f3"></div>
<div class="a" style="left:2357px;top:0;width:3px;height:54px;background:#f3f3f3"></div>
<div class="a" style="left:2573px;top:0;width:3px;height:54px;background:#f3f3f3"></div>
<div class="a" style="left:2663px;top:0;width:3px;height:54px;background:#f3f3f3"></div>
<div class="a" style="left:2861px;top:0;width:3px;height:54px;background:#f3f3f3"></div>
<div class="a" style="left:3149px;top:0;width:3px;height:54px;background:#f3f3f3"></div>
<div class="a" style="left:3257px;top:0;width:3px;height:54px;background:#f3f3f3"></div>
<div class="a" style="left:3311px;top:0;width:3px;height:54px;background:#f3f3f3"></div>
<div class="c" style="left:217px;width:303px;">Fattura incompleta</div>
<div class="c" style="left:812px;width:393px;">CLIC WAY</div>
<div class="c" style="left:1208px;width:51px;">FR</div>
<div class="c" style="left:1262px;width:267px;">52813552270</div>
<div class="c" style="left:1532px;width:212px;text-align:center;padding-left:0;">02/10/2022</div>
<div class="c" style="left:1747px;width:196px;text-align:center;padding-left:0;">02/10/2022</div>
<div class="c" style="left:1946px;width:195px;text-align:center;padding-left:0;">02/10/2022</div>
<div class="c" style="left:2144px;width:213px;">IT22-68211I-2022</div>
<div class="c" style="left:2360px;width:213px;text-align:right;padding-right:4px;padding-left:0;">13,32</div>
<div class="c" style="left:2864px;width:285px;">AUTO INVIATA</div>
<div class="c" style="left:3152px;width:105px;">TD01</div>
<div class="a" style="left:80px;top:12px"><svg width="30" height="30" viewBox="0 0 30 30"><path d="M5.3 4.6 H1.2 V26.7 H23.1 V23.5" fill="none" stroke="#555" stroke-width="1.9" stroke-linejoin="round"/><rect x="5.5" y="1" width="21" height="21.6" rx="1.2" fill="none" stroke="#555" stroke-width="1.9"/></svg></div>
<div class="a" style="left:168px;top:16px;width:20px;height:20px;border-radius:50%;background:#ad2340;box-shadow:0 0 0 2px #fff"></div>
<div class="a" style="left:3268px;top:12px"><svg width="30" height="30" viewBox="0 0 30 30"><path d="M5.3 4.8 H1.9 V26.6 H24 V23.4" fill="none" stroke="#555" stroke-width="1.9" stroke-linejoin="round"/><rect x="6.2" y="0.9" width="21.5" height="21.6" rx="1.4" fill="none" stroke="#555" stroke-width="1.9"/><path d="M10 13.3 L14.2 18.6 L24.5 4.7" fill="none" stroke="#4a4a4a" stroke-width="2.7" stroke-linejoin="round"/></svg></div>
<div class="a" style="left:3331px;top:12px"><svg width="30" height="30" viewBox="0 0 30 30"><path d="M5.3 4.8 H1.9 V26.6 H24 V23.4" fill="none" stroke="#555" stroke-width="1.9" stroke-linejoin="round"/><rect x="6.2" y="0.9" width="21.5" height="21.6" rx="1.4" fill="none" stroke="#555" stroke-width="1.9"/><path d="M10 13.3 L14.2 18.6 L24.5 4.7" fill="none" stroke="#4a4a4a" stroke-width="2.7" stroke-linejoin="round"/></svg></div>
</div>
<div class="a" style="left:0;top:486px;width:3380px;height:54px;background:#fff">
<div class="a" style="left:53px;top:0;width:3px;height:54px;background:#f3f3f3"></div>
<div class="a" style="left:142px;top:0;width:3px;height:54px;background:#f3f3f3"></div>
<div class="a" style="left:214px;top:0;width:3px;height:54px;background:#f3f3f3"></div>
<div class="a" style="left:520px;top:0;width:3px;height:54px;background:#f3f3f3"></div>
<div class="a" style="left:683px;top:0;width:3px;height:54px;background:#f3f3f3"></div>
<div class="a" style="left:809px;top:0;width:3px;height:54px;background:#f3f3f3"></div>
<div class="a" style="left:1205px;top:0;width:3px;height:54px;background:#f3f3f3"></div>
<div class="a" style="left:1259px;top:0;width:3px;height:54px;background:#f3f3f3"></div>
<div class="a" style="left:1529px;top:0;width:3px;height:54px;background:#f3f3f3"></div>
<div class="a" style="left:1744px;top:0;width:3px;height:54px;background:#f3f3f3"></div>
<div class="a" style="left:1943px;top:0;width:3px;height:54px;background:#f3f3f3"></div>
<div class="a" style="left:2141px;top:0;width:3px;height:54px;background:#f3f3f3"></div>
<div class="a" style="left:2357px;top:0;width:3px;height:54px;background:#f3f3f3"></div>
<div class="a" style="left:2573px;top:0;width:3px;height:54px;background:#f3f3f3"></div>
<div class="a" style="left:2663px;top:0;width:3px;height:54px;background:#f3f3f3"></div>
<div class="a" style="left:2861px;top:0;width:3px;height:54px;background:#f3f3f3"></div>
<div class="a" style="left:3149px;top:0;width:3px;height:54px;background:#f3f3f3"></div>
<div class="a" style="left:3257px;top:0;width:3px;height:54px;background:#f3f3f3"></div>
<div class="a" style="left:3311px;top:0;width:3px;height:54px;background:#f3f3f3"></div>
<div class="a" style="left:0;top:52px;width:3380px;height:2px;background:#f6f6f6"></div>
<div class="c" style="left:217px;width:303px;">Fattura incompleta</div>
<div class="c" style="left:812px;width:393px;">ENERGI THERMIE</div>
<div class="c" style="left:1208px;width:51px;">FR</div>
<div class="c" style="left:1262px;width:267px;">24881400980</div>
<div class="c" style="left:1532px;width:212px;text-align:center;padding-left:0;">02/10/2022</div>
<div class="c" style="left:1747px;width:196px;text-align:center;padding-left:0;">02/10/2022</div>
<div class="c" style="left:1946px;width:195px;text-align:center;padding-left:0;">02/10/2022</div>
<div class="c" style="left:2144px;width:213px;">IT22-68211I-2022</div>
<div class="c" style="left:2360px;width:213px;text-align:right;padding-right:4px;padding-left:0;">9,35</div>
<div class="c" style="left:2864px;width:285px;">AUTO INVIATA</div>
<div class="c" style="left:3152px;width:105px;">TD01</div>
<div class="a" style="left:80px;top:12px"><svg width="30" height="30" viewBox="0 0 30 30"><path d="M5.3 4.6 H1.2 V26.7 H23.1 V23.5" fill="none" stroke="#555" stroke-width="1.9" stroke-linejoin="round"/><rect x="5.5" y="1" width="21" height="21.6" rx="1.2" fill="none" stroke="#555" stroke-width="1.9"/></svg></div>
<div class="a" style="left:168px;top:16px;width:20px;height:20px;border-radius:50%;background:#ad2340;box-shadow:0 0 0 2px #fff"></div>
<div class="a" style="left:3268px;top:12px"><svg width="30" height="30" viewBox="0 0 30 30"><path d="M5.3 4.8 H1.9 V26.6 H24 V23.4" fill="none" stroke="#555" stroke-width="1.9" stroke-linejoin="round"/><rect x="6.2" y="0.9" width="21.5" height="21.6" rx="1.4" fill="none" stroke="#555" stroke-width="1.9"/><path d="M10 13.3 L14.2 18.6 L24.5 4.7" fill="none" stroke="#4a4a4a" stroke-width="2.7" stroke-linejoin="round"/></svg></div>
<div class="a" style="left:3331px;top:12px"><svg width="30" height="30" viewBox="0 0 30 30"><path d="M5.3 4.8 H1.9 V26.6 H24 V23.4" fill="none" stroke="#555" stroke-width="1.9" stroke-linejoin="round"/><rect x="6.2" y="0.9" width="21.5" height="21.6" rx="1.4" fill="none" stroke="#555" stroke-width="1.9"/><path d="M10 13.3 L14.2 18.6 L24.5 4.7" fill="none" stroke="#4a4a4a" stroke-width="2.7" stroke-linejoin="round"/></svg></div>
</div>
<div class="a" style="left:0;top:540px;width:3380px;height:54px;background:#f4f4f4">
<div class="a" style="left:53px;top:0;width:3px;height:54px;background:#f3f3f3"></div>
<div class="a" style="left:142px;top:0;width:3px;height:54px;background:#f3f3f3"></div>
<div class="a" style="left:214px;top:0;width:3px;height:54px;background:#f3f3f3"></div>
<div class="a" style="left:520px;top:0;width:3px;height:54px;background:#f3f3f3"></div>
<div class="a" style="left:683px;top:0;width:3px;height:54px;background:#f3f3f3"></div>
<div class="a" style="left:809px;top:0;width:3px;height:54px;background:#f3f3f3"></div>
<div class="a" style="left:1205px;top:0;width:3px;height:54px;background:#f3f3f3"></div>
<div class="a" style="left:1259px;top:0;width:3px;height:54px;background:#f3f3f3"></div>
<div class="a" style="left:1529px;top:0;width:3px;height:54px;background:#f3f3f3"></div>
<div class="a" style="left:1744px;top:0;width:3px;height:54px;background:#f3f3f3"></div>
<div class="a" style="left:1943px;top:0;width:3px;height:54px;background:#f3f3f3"></div>
<div class="a" style="left:2141px;top:0;width:3px;height:54px;background:#f3f3f3"></div>
<div class="a" style="left:2357px;top:0;width:3px;height:54px;background:#f3f3f3"></div>
<div class="a" style="left:2573px;top:0;width:3px;height:54px;background:#f3f3f3"></div>
<div class="a" style="left:2663px;top:0;width:3px;height:54px;background:#f3f3f3"></div>
<div class="a" style="left:2861px;top:0;width:3px;height:54px;background:#f3f3f3"></div>
<div class="a" style="left:3149px;top:0;width:3px;height:54px;background:#f3f3f3"></div>
<div class="a" style="left:3257px;top:0;width:3px;height:54px;background:#f3f3f3"></div>
<div class="a" style="left:3311px;top:0;width:3px;height:54px;background:#f3f3f3"></div>
<div class="c" style="left:217px;width:303px;">Fattura incompleta</div>
<div class="c" style="left:812px;width:393px;">Mage sprl</div>
<div class="c" style="left:1208px;width:51px;">BE</div>
<div class="c" style="left:1262px;width:267px;">0870371793</div>
<div class="c" style="left:1532px;width:212px;text-align:center;padding-left:0;">02/10/2022</div>
<div class="c" style="left:1747px;width:196px;text-align:center;padding-left:0;">02/10/2022</div>
<div class="c" style="left:1946px;width:195px;text-align:center;padding-left:0;">02/10/2022</div>
<div class="c" style="left:2144px;width:213px;">IT22-68211I-2022</div>
<div class="c" style="left:2360px;width:213px;text-align:right;padding-right:4px;padding-left:0;">40,07</div>
<div class="c" style="left:2864px;width:285px;">AUTO INVIATA</div>
<div class="c" style="left:3152px;width:105px;">TD01</div>
<div class="a" style="left:80px;top:12px"><svg width="30" height="30" viewBox="0 0 30 30"><path d="M5.3 4.6 H1.2 V26.7 H23.1 V23.5" fill="none" stroke="#555" stroke-width="1.9" stroke-linejoin="round"/><rect x="5.5" y="1" width="21" height="21.6" rx="1.2" fill="none" stroke="#555" stroke-width="1.9"/></svg></div>
<div class="a" style="left:168px;top:16px;width:20px;height:20px;border-radius:50%;background:#ad2340;box-shadow:0 0 0 2px #fff"></div>
<div class="a" style="left:3268px;top:12px"><svg width="30" height="30" viewBox="0 0 30 30"><path d="M5.3 4.8 H1.9 V26.6 H24 V23.4" fill="none" stroke="#555" stroke-width="1.9" stroke-linejoin="round"/><rect x="6.2" y="0.9" width="21.5" height="21.6" rx="1.4" fill="none" stroke="#555" stroke-width="1.9"/><path d="M10 13.3 L14.2 18.6 L24.5 4.7" fill="none" stroke="#4a4a4a" stroke-width="2.7" stroke-linejoin="round"/></svg></div>
<div class="a" style="left:3331px;top:12px"><svg width="30" height="30" viewBox="0 0 30 30"><path d="M5.3 4.8 H1.9 V26.6 H24 V23.4" fill="none" stroke="#555" stroke-width="1.9" stroke-linejoin="round"/><rect x="6.2" y="0.9" width="21.5" height="21.6" rx="1.4" fill="none" stroke="#555" stroke-width="1.9"/><path d="M10 13.3 L14.2 18.6 L24.5 4.7" fill="none" stroke="#4a4a4a" stroke-width="2.7" stroke-linejoin="round"/></svg></div>
</div>
<div class="a" style="left:0;top:594px;width:3380px;height:54px;background:#fff">
<div class="a" style="left:53px;top:0;width:3px;height:54px;background:#f3f3f3"></div>
<div class="a" style="left:142px;top:0;width:3px;height:54px;background:#f3f3f3"></div>
<div class="a" style="left:214px;top:0;width:3px;height:54px;background:#f3f3f3"></div>
<div class="a" style="left:520px;top:0;width:3px;height:54px;background:#f3f3f3"></div>
<div class="a" style="left:683px;top:0;width:3px;height:54px;background:#f3f3f3"></div>
<div class="a" style="left:809px;top:0;width:3px;height:54px;background:#f3f3f3"></div>
<div class="a" style="left:1205px;top:0;width:3px;height:54px;background:#f3f3f3"></div>
<div class="a" style="left:1259px;top:0;width:3px;height:54px;background:#f3f3f3"></div>
<div class="a" style="left:1529px;top:0;width:3px;height:54px;background:#f3f3f3"></div>
<div class="a" style="left:1744px;top:0;width:3px;height:54px;background:#f3f3f3"></div>
<div class="a" style="left:1943px;top:0;width:3px;height:54px;background:#f3f3f3"></div>
<div class="a" style="left:2141px;top:0;width:3px;height:54px;background:#f3f3f3"></div>
<div class="a" style="left:2357px;top:0;width:3px;height:54px;background:#f3f3f3"></div>
<div class="a" style="left:2573px;top:0;width:3px;height:54px;background:#f3f3f3"></div>
<div class="a" style="left:2663px;top:0;width:3px;height:54px;background:#f3f3f3"></div>
<div class="a" style="left:2861px;top:0;width:3px;height:54px;background:#f3f3f3"></div>
<div class="a" style="left:3149px;top:0;width:3px;height:54px;background:#f3f3f3"></div>
<div class="a" style="left:3257px;top:0;width:3px;height:54px;background:#f3f3f3"></div>
<div class="a" style="left:3311px;top:0;width:3px;height:54px;background:#f3f3f3"></div>
<div class="a" style="left:0;top:52px;width:3380px;height:2px;background:#f6f6f6"></div>
<div class="c" style="left:217px;width:303px;">Fattura incompleta</div>
<div class="c" style="left:812px;width:393px;">ITPROFIS Wagner GmbH</div>
<div class="c" style="left:1208px;width:51px;">DE</div>
<div class="c" style="left:1262px;width:267px;">299366776</div>
<div class="c" style="left:1532px;width:212px;text-align:center;padding-left:0;">02/10/2022</div>
<div class="c" style="left:1747px;width:196px;text-align:center;padding-left:0;">02/10/2022</div>
<div class="c" style="left:1946px;width:195px;text-align:center;padding-left:0;">02/10/2022</div>
<div class="c" style="left:2144px;width:213px;">IT22-68211I-2022</div>
<div class="c" style="left:2360px;width:213px;text-align:right;padding-right:4px;padding-left:0;">83,40</div>
<div class="c" style="left:2864px;width:285px;">AUTO INVIATA</div>
<div class="c" style="left:3152px;width:105px;">TD01</div>
<div class="a" style="left:80px;top:12px"><svg width="30" height="30" viewBox="0 0 30 30"><path d="M5.3 4.6 H1.2 V26.7 H23.1 V23.5" fill="none" stroke="#555" stroke-width="1.9" stroke-linejoin="round"/><rect x="5.5" y="1" width="21" height="21.6" rx="1.2" fill="none" stroke="#555" stroke-width="1.9"/></svg></div>
<div class="a" style="left:168px;top:16px;width:20px;height:20px;border-radius:50%;background:#ad2340;box-shadow:0 0 0 2px #fff"></div>
<div class="a" style="left:3268px;top:12px"><svg width="30" height="30" viewBox="0 0 30 30"><path d="M5.3 4.8 H1.9 V26.6 H24 V23.4" fill="none" stroke="#555" stroke-width="1.9" stroke-linejoin="round"/><rect x="6.2" y="0.9" width="21.5" height="21.6" rx="1.4" fill="none" stroke="#555" stroke-width="1.9"/><path d="M10 13.3 L14.2 18.6 L24.5 4.7" fill="none" stroke="#4a4a4a" stroke-width="2.7" stroke-linejoin="round"/></svg></div>
<div class="a" style="left:3331px;top:12px"><svg width="30" height="30" viewBox="0 0 30 30"><path d="M5.3 4.8 H1.9 V26.6 H24 V23.4" fill="none" stroke="#555" stroke-width="1.9" stroke-linejoin="round"/><rect x="6.2" y="0.9" width="21.5" height="21.6" rx="1.4" fill="none" stroke="#555" stroke-width="1.9"/><path d="M10 13.3 L14.2 18.6 L24.5 4.7" fill="none" stroke="#4a4a4a" stroke-width="2.7" stroke-linejoin="round"/></svg></div>
</div>
<div class="a" style="left:0;top:648px;width:3380px;height:54px;background:#f4f4f4">
<div class="a" style="left:53px;top:0;width:3px;height:54px;background:#f3f3f3"></div>
<div class="a" style="left:142px;top:0;width:3px;height:54px;background:#f3f3f3"></div>
<div class="a" style="left:214px;top:0;width:3px;height:54px;background:#f3f3f3"></div>
<div class="a" style="left:520px;top:0;width:3px;height:54px;background:#f3f3f3"></div>
<div class="a" style="left:683px;top:0;width:3px;height:54px;background:#f3f3f3"></div>
<div class="a" style="left:809px;top:0;width:3px;height:54px;background:#f3f3f3"></div>
<div class="a" style="left:1205px;top:0;width:3px;height:54px;background:#f3f3f3"></div>
<div class="a" style="left:1259px;top:0;width:3px;height:54px;background:#f3f3f3"></div>
<div class="a" style="left:1529px;top:0;width:3px;height:54px;background:#f3f3f3"></div>
<div class="a" style="left:1744px;top:0;width:3px;height:54px;background:#f3f3f3"></div>
<div class="a" style="left:1943px;top:0;width:3px;height:54px;background:#f3f3f3"></div>
<div class="a" style="left:2141px;top:0;width:3px;height:54px;background:#f3f3f3"></div>
<div class="a" style="left:2357px;top:0;width:3px;height:54px;background:#f3f3f3"></div>
<div class="a" style="left:2573px;top:0;width:3px;height:54px;background:#f3f3f3"></div>
<div class="a" style="left:2663px;top:0;width:3px;height:54px;background:#f3f3f3"></div>
<div class="a" style="left:2861px;top:0;width:3px;height:54px;background:#f3f3f3"></div>
<div class="a" style="left:3149px;top:0;width:3px;height:54px;background:#f3f3f3"></div>
<div class="a" style="left:3257px;top:0;width:3px;height:54px;background:#f3f3f3"></div>
<div class="a" style="left:3311px;top:0;width:3px;height:54px;background:#f3f3f3"></div>
<div class="c" style="left:217px;width:303px;">Fattura incompleta</div>
<div class="c" style="left:812px;width:393px;">SAS KORTO CONSULTING</div>
<div class="c" style="left:1208px;width:51px;">FR</div>
<div class="c" style="left:1262px;width:267px;">67830595757</div>
<div class="c" style="left:1532px;width:212px;text-align:center;padding-left:0;">02/10/2022</div>
<div class="c" style="left:1747px;width:196px;text-align:center;padding-left:0;">02/10/2022</div>
<div class="c" style="left:1946px;width:195px;text-align:center;padding-left:0;">02/10/2022</div>
<div class="c" style="left:2144px;width:213px;">IT22-68211I-2022</div>
<div class="c" style="left:2360px;width:213px;text-align:right;padding-right:4px;padding-left:0;">8,32</div>
<div class="c" style="left:2864px;width:285px;">AUTO INVIATA</div>
<div class="c" style="left:3152px;width:105px;">TD01</div>
<div class="a" style="left:80px;top:12px"><svg width="30" height="30" viewBox="0 0 30 30"><path d="M5.3 4.6 H1.2 V26.7 H23.1 V23.5" fill="none" stroke="#555" stroke-width="1.9" stroke-linejoin="round"/><rect x="5.5" y="1" width="21" height="21.6" rx="1.2" fill="none" stroke="#555" stroke-width="1.9"/></svg></div>
<div class="a" style="left:168px;top:16px;width:20px;height:20px;border-radius:50%;background:#ad2340;box-shadow:0 0 0 2px #fff"></div>
<div class="a" style="left:3268px;top:12px"><svg width="30" height="30" viewBox="0 0 30 30"><path d="M5.3 4.8 H1.9 V26.6 H24 V23.4" fill="none" stroke="#555" stroke-width="1.9" stroke-linejoin="round"/><rect x="6.2" y="0.9" width="21.5" height="21.6" rx="1.4" fill="none" stroke="#555" stroke-width="1.9"/><path d="M10 13.3 L14.2 18.6 L24.5 4.7" fill="none" stroke="#4a4a4a" stroke-width="2.7" stroke-linejoin="round"/></svg></div>
<div class="a" style="left:3331px;top:12px"><svg width="30" height="30" viewBox="0 0 30 30"><path d="M5.3 4.8 H1.9 V26.6 H24 V23.4" fill="none" stroke="#555" stroke-width="1.9" stroke-linejoin="round"/><rect x="6.2" y="0.9" width="21.5" height="21.6" rx="1.4" fill="none" stroke="#555" stroke-width="1.9"/><path d="M10 13.3 L14.2 18.6 L24.5 4.7" fill="none" stroke="#4a4a4a" stroke-width="2.7" stroke-linejoin="round"/></svg></div>
</div>
<div class="a" style="left:0;top:702px;width:3380px;height:54px;background:#fff">
<div class="a" style="left:53px;top:0;width:3px;height:54px;background:#f3f3f3"></div>
<div class="a" style="left:142px;top:0;width:3px;height:54px;background:#f3f3f3"></div>
<div class="a" style="left:214px;top:0;width:3px;height:54px;background:#f3f3f3"></div>
<div class="a" style="left:520px;top:0;width:3px;height:54px;background:#f3f3f3"></div>
<div class="a" style="left:683px;top:0;width:3px;height:54px;background:#f3f3f3"></div>
<div class="a" style="left:809px;top:0;width:3px;height:54px;background:#f3f3f3"></div>
<div class="a" style="left:1205px;top:0;width:3px;height:54px;background:#f3f3f3"></div>
<div class="a" style="left:1259px;top:0;width:3px;height:54px;background:#f3f3f3"></div>
<div class="a" style="left:1529px;top:0;width:3px;height:54px;background:#f3f3f3"></div>
<div class="a" style="left:1744px;top:0;width:3px;height:54px;background:#f3f3f3"></div>
<div class="a" style="left:1943px;top:0;width:3px;height:54px;background:#f3f3f3"></div>
<div class="a" style="left:2141px;top:0;width:3px;height:54px;background:#f3f3f3"></div>
<div class="a" style="left:2357px;top:0;width:3px;height:54px;background:#f3f3f3"></div>
<div class="a" style="left:2573px;top:0;width:3px;height:54px;background:#f3f3f3"></div>
<div class="a" style="left:2663px;top:0;width:3px;height:54px;background:#f3f3f3"></div>
<div class="a" style="left:2861px;top:0;width:3px;height:54px;background:#f3f3f3"></div>
<div class="a" style="left:3149px;top:0;width:3px;height:54px;background:#f3f3f3"></div>
<div class="a" style="left:3257px;top:0;width:3px;height:54px;background:#f3f3f3"></div>
<div class="a" style="left:3311px;top:0;width:3px;height:54px;background:#f3f3f3"></div>
<div class="a" style="left:0;top:52px;width:3380px;height:2px;background:#f6f6f6"></div>
<div class="c" style="left:217px;width:303px;">Fattura incompleta</div>
<div class="c" style="left:812px;width:393px;">BS Partners</div>
<div class="c" style="left:1208px;width:51px;">FR</div>
<div class="c" style="left:1262px;width:267px;">78843905357</div>
<div class="c" style="left:1532px;width:212px;text-align:center;padding-left:0;">03/10/2022</div>
<div class="c" style="left:1747px;width:196px;text-align:center;padding-left:0;">03/10/2022</div>
<div class="c" style="left:1946px;width:195px;text-align:center;padding-left:0;">03/10/2022</div>
<div class="c" style="left:2144px;width:213px;">IT22-68211I-2022</div>
<div class="c" style="left:2360px;width:213px;text-align:right;padding-right:4px;padding-left:0;">12,24</div>
<div class="c" style="left:2864px;width:285px;">AUTO INVIATA</div>
<div class="c" style="left:3152px;width:105px;">TD01</div>
<div class="a" style="left:80px;top:12px"><svg width="30" height="30" viewBox="0 0 30 30"><path d="M5.3 4.6 H1.2 V26.7 H23.1 V23.5" fill="none" stroke="#555" stroke-width="1.9" stroke-linejoin="round"/><rect x="5.5" y="1" width="21" height="21.6" rx="1.2" fill="none" stroke="#555" stroke-width="1.9"/></svg></div>
<div class="a" style="left:168px;top:16px;width:20px;height:20px;border-radius:50%;background:#ad2340;box-shadow:0 0 0 2px #fff"></div>
<div class="a" style="left:3268px;top:12px"><svg width="30" height="30" viewBox="0 0 30 30"><path d="M5.3 4.8 H1.9 V26.6 H24 V23.4" fill="none" stroke="#555" stroke-width="1.9" stroke-linejoin="round"/><rect x="6.2" y="0.9" width="21.5" height="21.6" rx="1.4" fill="none" stroke="#555" stroke-width="1.9"/><path d="M10 13.3 L14.2 18.6 L24.5 4.7" fill="none" stroke="#4a4a4a" stroke-width="2.7" stroke-linejoin="round"/></svg></div>
<div class="a" style="left:3331px;top:12px"><svg width="30" height="30" viewBox="0 0 30 30"><path d="M5.3 4.8 H1.9 V26.6 H24 V23.4" fill="none" stroke="#555" stroke-width="1.9" stroke-linejoin="round"/><rect x="6.2" y="0.9" width="21.5" height="21.6" rx="1.4" fill="none" stroke="#555" stroke-width="1.9"/><path d="M10 13.3 L14.2 18.6 L24.5 4.7" fill="none" stroke="#4a4a4a" stroke-width="2.7" stroke-linejoin="round"/></svg></div>
</div>
<div class="a" style="left:0;top:756px;width:3380px;height:54px;background:#f4f4f4">
<div class="a" style="left:53px;top:0;width:3px;height:54px;background:#f3f3f3"></div>
<div class="a" style="left:142px;top:0;width:3px;height:54px;background:#f3f3f3"></div>
<div class="a" style="left:214px;top:0;width:3px;height:54px;background:#f3f3f3"></div>
<div class="a" style="left:520px;top:0;width:3px;height:54px;background:#f3f3f3"></div>
<div class="a" style="left:683px;top:0;width:3px;height:54px;background:#f3f3f3"></div>
<div class="a" style="left:809px;top:0;width:3px;height:54px;background:#f3f3f3"></div>
<div class="a" style="left:1205px;top:0;width:3px;height:54px;background:#f3f3f3"></div>
<div class="a" style="left:1259px;top:0;width:3px;height:54px;background:#f3f3f3"></div>
<div class="a" style="left:1529px;top:0;width:3px;height:54px;background:#f3f3f3"></div>
<div class="a" style="left:1744px;top:0;width:3px;height:54px;background:#f3f3f3"></div>
<div class="a" style="left:1943px;top:0;width:3px;height:54px;background:#f3f3f3"></div>
<div class="a" style="left:2141px;top:0;width:3px;height:54px;background:#f3f3f3"></div>
<div class="a" style="left:2357px;top:0;width:3px;height:54px;background:#f3f3f3"></div>
<div class="a" style="left:2573px;top:0;width:3px;height:54px;background:#f3f3f3"></div>
<div class="a" style="left:2663px;top:0;width:3px;height:54px;background:#f3f3f3"></div>
<div class="a" style="left:2861px;top:0;width:3px;height:54px;background:#f3f3f3"></div>
<div class="a" style="left:3149px;top:0;width:3px;height:54px;background:#f3f3f3"></div>
<div class="a" style="left:3257px;top:0;width:3px;height:54px;background:#f3f3f3"></div>
<div class="a" style="left:3311px;top:0;width:3px;height:54px;background:#f3f3f3"></div>
<div class="c" style="left:217px;width:303px;">Fattura incompleta</div>
<div class="c" style="left:812px;width:393px;">ITC COMUNICACIONES</div>
<div class="c" style="left:1208px;width:51px;">ES</div>
<div class="c" style="left:1262px;width:267px;">B11908456</div>
<div class="c" style="left:1532px;width:212px;text-align:center;padding-left:0;">03/10/2022</div>
<div class="c" style="left:1747px;width:196px;text-align:center;padding-left:0;">03/10/2022</div>
<div class="c" style="left:1946px;width:195px;text-align:center;padding-left:0;">03/10/2022</div>
<div class="c" style="left:2144px;width:213px;">IT22-68211I-2022</div>
<div class="c" style="left:2360px;width:213px;text-align:right;padding-right:4px;padding-left:0;">22,18</div>
<div class="c" style="left:2864px;width:285px;">AUTO INVIATA</div>
<div class="c" style="left:3152px;width:105px;">TD01</div>
<div class="a" style="left:80px;top:12px"><svg width="30" height="30" viewBox="0 0 30 30"><path d="M5.3 4.6 H1.2 V26.7 H23.1 V23.5" fill="none" stroke="#555" stroke-width="1.9" stroke-linejoin="round"/><rect x="5.5" y="1" width="21" height="21.6" rx="1.2" fill="none" stroke="#555" stroke-width="1.9"/></svg></div>
<div class="a" style="left:168px;top:16px;width:20px;height:20px;border-radius:50%;background:#ad2340;box-shadow:0 0 0 2px #fff"></div>
<div class="a" style="left:3268px;top:12px"><svg width="30" height="30" viewBox="0 0 30 30"><path d="M5.3 4.8 H1.9 V26.6 H24 V23.4" fill="none" stroke="#555" stroke-width="1.9" stroke-linejoin="round"/><rect x="6.2" y="0.9" width="21.5" height="21.6" rx="1.4" fill="none" stroke="#555" stroke-width="1.9"/><path d="M10 13.3 L14.2 18.6 L24.5 4.7" fill="none" stroke="#4a4a4a" stroke-width="2.7" stroke-linejoin="round"/></svg></div>
<div class="a" style="left:3331px;top:12px"><svg width="30" height="30" viewBox="0 0 30 30"><path d="M5.3 4.8 H1.9 V26.6 H24 V23.4" fill="none" stroke="#555" stroke-width="1.9" stroke-linejoin="round"/><rect x="6.2" y="0.9" width="21.5" height="21.6" rx="1.4" fill="none" stroke="#555" stroke-width="1.9"/><path d="M10 13.3 L14.2 18.6 L24.5 4.7" fill="none" stroke="#4a4a4a" stroke-width="2.7" stroke-linejoin="round"/></svg></div>
</div>
<div class="a" style="left:0;top:810px;width:3380px;height:54px;background:#fff">
<div class="a" style="left:53px;top:0;width:3px;height:54px;background:#f3f3f3"></div>
<div class="a" style="left:142px;top:0;width:3px;height:54px;background:#f3f3f3"></div>
<div class="a" style="left:214px;top:0;width:3px;height:54px;background:#f3f3f3"></div>
<div class="a" style="left:520px;top:0;width:3px;height:54px;background:#f3f3f3"></div>
<div class="a" style="left:683px;top:0;width:3px;height:54px;background:#f3f3f3"></div>
<div class="a" style="left:809px;top:0;width:3px;height:54px;background:#f3f3f3"></div>
<div class="a" style="left:1205px;top:0;width:3px;height:54px;background:#f3f3f3"></div>
<div class="a" style="left:1259px;top:0;width:3px;height:54px;background:#f3f3f3"></div>
<div class="a" style="left:1529px;top:0;width:3px;height:54px;background:#f3f3f3"></div>
<div class="a" style="left:1744px;top:0;width:3px;height:54px;background:#f3f3f3"></div>
<div class="a" style="left:1943px;top:0;width:3px;height:54px;background:#f3f3f3"></div>
<div class="a" style="left:2141px;top:0;width:3px;height:54px;background:#f3f3f3"></div>
<div class="a" style="left:2357px;top:0;width:3px;height:54px;background:#f3f3f3"></div>
<div class="a" style="left:2573px;top:0;width:3px;height:54px;background:#f3f3f3"></div>
<div class="a" style="left:2663px;top:0;width:3px;height:54px;background:#f3f3f3"></div>
<div class="a" style="left:2861px;top:0;width:3px;height:54px;background:#f3f3f3"></div>
<div class="a" style="left:3149px;top:0;width:3px;height:54px;background:#f3f3f3"></div>
<div class="a" style="left:3257px;top:0;width:3px;height:54px;background:#f3f3f3"></div>
<div class="a" style="left:3311px;top:0;width:3px;height:54px;background:#f3f3f3"></div>
<div class="a" style="left:0;top:52px;width:3380px;height:2px;background:#f6f6f6"></div>
<div class="c" style="left:217px;width:303px;">Fattura incompleta</div>
<div class="c" style="left:812px;width:393px;">Claudia Kohlhuber</div>
<div class="c" style="left:1208px;width:51px;">CH</div>
<div class="c" style="left:1262px;width:267px;">0000000</div>
<div class="c" style="left:1532px;width:212px;text-align:center;padding-left:0;">03/10/2022</div>
<div class="c" style="left:1747px;width:196px;text-align:center;padding-left:0;">03/10/2022</div>
<div class="c" style="left:1946px;width:195px;text-align:center;padding-left:0;">03/10/2022</div>
<div class="c" style="left:2144px;width:213px;">IT22-68211I-2022</div>
<div class="c" style="left:2360px;width:213px;text-align:right;padding-right:4px;padding-left:0;">37,62</div>
<div class="c" style="left:2864px;width:285px;">AUTO INVIATA</div>
<div class="c" style="left:3152px;width:105px;">TD01</div>
<div class="a" style="left:80px;top:12px"><svg width="30" height="30" viewBox="0 0 30 30"><path d="M5.3 4.6 H1.2 V26.7 H23.1 V23.5" fill="none" stroke="#555" stroke-width="1.9" stroke-linejoin="round"/><rect x="5.5" y="1" width="21" height="21.6" rx="1.2" fill="none" stroke="#555" stroke-width="1.9"/></svg></div>
<div class="a" style="left:168px;top:16px;width:20px;height:20px;border-radius:50%;background:#ad2340;box-shadow:0 0 0 2px #fff"></div>
<div class="a" style="left:3268px;top:12px"><svg width="30" height="30" viewBox="0 0 30 30"><path d="M5.3 4.8 H1.9 V26.6 H24 V23.4" fill="none" stroke="#555" stroke-width="1.9" stroke-linejoin="round"/><rect x="6.2" y="0.9" width="21.5" height="21.6" rx="1.4" fill="none" stroke="#555" stroke-width="1.9"/><path d="M10 13.3 L14.2 18.6 L24.5 4.7" fill="none" stroke="#4a4a4a" stroke-width="2.7" stroke-linejoin="round"/></svg></div>
<div class="a" style="left:3331px;top:12px"><svg width="30" height="30" viewBox="0 0 30 30"><path d="M5.3 4.8 H1.9 V26.6 H24 V23.4" fill="none" stroke="#555" stroke-width="1.9" stroke-linejoin="round"/><rect x="6.2" y="0.9" width="21.5" height="21.6" rx="1.4" fill="none" stroke="#555" stroke-width="1.9"/><path d="M10 13.3 L14.2 18.6 L24.5 4.7" fill="none" stroke="#4a4a4a" stroke-width="2.7" stroke-linejoin="round"/></svg></div>
</div>
</div>
<div class="a" style="left:126px;top:709px;width:3380px;height:2px;background:#fff"></div>
<div class="a" style="left:124px;top:655px;width:2px;height:916px;background:#a8a8a8"></div>
<div class="a" style="left:124px;top:1569px;width:3417px;height:2px;background:#a8a8a8"></div>
<div class="a" style="left:3538px;top:655px;width:2px;height:916px;background:#a8a8a8"></div>
<div class="a" style="left:3506px;top:655px;width:32px;height:914px;background:#f0f0f0"></div>
<div class="a" style="left:3506px;top:654px;width:34px;height:2px;background:#b0b0b0"></div>
<div class="a" style="left:3506px;top:884px;width:33px;height:2px;background:#e2e2e2"></div>
<div class="a" style="left:3506px;top:1112px;width:33px;height:2px;background:#e2e2e2"></div>
<div class="a" style="left:3506px;top:1341px;width:33px;height:2px;background:#e2e2e2"></div>
<svg class="a" style="left:3513px;top:766px" width="16" height="9" viewBox="0 0 16 9"><path d="M0 9H16L8 0Z" fill="#999"/></svg>
<svg class="a" style="left:3513px;top:987px" width="16" height="20" viewBox="0 0 16 20"><path d="M0 9H16L8 0Z M0 20H16L8 11Z" fill="#999"/></svg>
<svg class="a" style="left:3513px;top:1218px" width="16" height="20" viewBox="0 0 16 20"><path d="M0 0H16L8 9Z M0 11H16L8 20Z" fill="#999"/></svg>
<svg class="a" style="left:3513px;top:1453px" width="16" height="9" viewBox="0 0 16 9"><path d="M0 0H16L8 9Z" fill="#999"/></svg>
<div class="a" style="left:122.5px;top:715px;width:3381px;height:50px;border:4.2px solid #e21f2c;border-radius:3px"></div>
<div class="btn" style="left:3564px;top:657px;width:260px;height:105px">Seleziona tutto</div>
<div class="btn" style="left:3564px;top:767px;width:260px;height:105px">Dettaglio<br>fattura</div>
<div class="btn" style="left:3564px;top:877px;width:260px;height:105px">Stati della<br>fattura</div>
<div class="btn g" style="left:3564px;top:987px;width:260px;height:105px">Variazione<br>prima nota</div>
<div class="btn" style="left:3564px;top:1097px;width:260px;height:105px">Inizio<br>Anteprima</div>
<div class="btn" style="left:3564px;top:1207px;width:260px;height:105px">Contabilizza<br>dati</div>
<div class="btn" style="left:3564px;top:1317px;width:260px;height:105px">Prelievo</div>
<div class="btn" style="left:3564px;top:1427px;width:260px;height:105px">Inserimento<br>prima nota</div>
<div class="btn" style="left:3564px;top:1537px;width:260px;height:105px">Assegna<br>quater/sez.</div>
<div class="a" style="left:80px;top:1673px;width:3760px;height:2px;background:#666"></div>
<div class="btn" style="left:94px;top:1690px;width:260px;height:106px">Gestione viste</div>
<div class="btn" style="left:358px;top:1690px;width:260px;height:106px">Stampa griglia</div>
<div class="btn" style="left:622px;top:1690px;width:260px;height:106px">Export griglia</div>
<div class="btn g" style="left:886px;top:1690px;width:260px;height:106px">Variazione<br>documento</div>
<div class="btn g" style="left:1150px;top:1690px;width:260px;height:106px">Stampa<br>documento</div>
<div class="btn" style="left:1414px;top:1690px;width:260px;height:106px">Altre funzioni</div>
<div class="btn" style="left:3302px;top:1690px;width:260px;height:106px"><u>F</u>iltri</div>
<div class="btn" style="left:3566px;top:1690px;width:260px;height:106px"><u>U</u>scita</div>
<div class="a" style="left:80px;top:1806px;width:3760px;height:12px;background:#bbbbbb"></div>
<div class="a" style="left:0;top:1818px;width:3840px;height:40px;background:#eeeeee"></div>
<div class="t" style="left:140px;top:1826px;font-size:25.25px;color:#000;-webkit-text-stroke:0.75px #000">start: GAMMA versione: 2022.00.07 comando: ECONS - EVAGYOFTGR - Contabilizzazione fatture attive - Azienda: 113 A2Z WORLD S.R.L.</div>
<div class="t" style="left:3540px;top:1827px;font-size:24.7px;font-weight:bold;color:#2a2a2a">TeamSystem Experience</div>
<svg class="a" style="left:3400px;top:780px" width="200" height="200" viewBox="3400 780 200 200"><path d="M3433.5 950 L3550 836" stroke="#e21f2c" stroke-width="9" stroke-linecap="round"/><path d="M3569 815 L3528.5 830.5 L3545 839.5 L3553.5 855 Z" fill="#e21f2c" stroke="#e21f2c" stroke-width="2" stroke-linejoin="round"/></svg>
<svg class="a" style="left:0;top:0" width="3840" height="1858" viewBox="0 0 3840 1858">
<line x1="26" y1="30" x2="54" y2="30" stroke="#ffffff" stroke-width="4" stroke-linecap="round"/>
<line x1="26" y1="40.7" x2="54" y2="40.7" stroke="#ffffff" stroke-width="4" stroke-linecap="round"/>
<line x1="26" y1="51.8" x2="54" y2="51.8" stroke="#ffffff" stroke-width="4" stroke-linecap="round"/>
<path d="M15 84 Q15 79.5 20 79.5 L32 79.5 L32 84.5 L36 84.5 L36 97 L32.5 97 L32.5 111 Q32.5 119 39 121.5 Q35 127.5 27 128 Q15 128 15 115 Z" fill="#ffffff"/>
<path d="M44 92 Q44 85.5 53 85.5 L65 85.5 L65 95 L61.5 95 Q60 99 61 104 L62 116 Q62 129.5 46 130 L35 130 Q44 125 45.5 116 L46 106 Q44 99 44 92 Z" fill="#ffffff"/>
<circle cx="36.8" cy="218.5" r="12.9" fill="none" stroke="#ffffff" stroke-width="4"/>
<line x1="46.5" y1="228.5" x2="56.5" y2="238.2" stroke="#ffffff" stroke-width="4" stroke-linecap="round"/>
<path d="M23 1127 Q20 1131 23 1138 Q30 1152 45 1157 Q52 1159 55 1157 L55 1149 Q50 1146 45 1147 L41 1150 Q35 1147 30 1140 L32 1135 Q32 1130 30 1125 Z" fill="#ffffff"/>
<circle cx="47" cy="1130.5" r="9" fill="#ffffff"/>
<path d="M23 1219.5 H37.5 Q37.5 1208.5 30 1208.5 Q21.3 1208.5 21.3 1220 Q21.3 1231.6 31 1231.6 Q38.5 1231.6 42 1224 L45.5 1215 Q48 1208.6 55 1208.6 H62.3 M44.3 1222 Q46.5 1231.6 54.5 1231.6 H62.3" fill="none" stroke="#ffffff" stroke-width="5.4"/>
<path d="M25 1303 Q25 1283 40 1283 Q55 1283 55 1303" fill="none" stroke="#ffffff" stroke-width="3.5"/>
<rect x="24" y="1297" width="7" height="12" rx="2" fill="none" stroke="#ffffff" stroke-width="3"/>
<rect x="49" y="1297" width="7" height="12" rx="2" fill="none" stroke="#ffffff" stroke-width="3"/>
<path d="M56 1309 Q56 1314 50 1314 L41 1314" fill="none" stroke="#ffffff" stroke-width="3"/>
<ellipse cx="40" cy="1314" rx="5" ry="3.5" fill="#ffffff"/>
<polygon points="40.00,1364.00 44.41,1374.93 56.17,1375.75 47.13,1383.32 49.99,1394.75 40.00,1388.50 30.01,1394.75 32.87,1383.32 23.83,1375.75 35.59,1374.93" fill="none" stroke="#ffffff" stroke-width="3.5" stroke-linejoin="round"/>
<path d="M26 1471 L29 1467 L29 1458 Q29 1446 40 1446 Q51 1446 51 1458 L51 1467 L54 1471 Z" fill="none" stroke="#ffffff" stroke-width="3.5" stroke-linejoin="round"/>
<circle cx="40" cy="1444" r="2" fill="#ffffff"/>
<path d="M35 1474 Q40 1480 45 1474 Z" fill="#ffffff"/>
<polygon points="56.17,1536.72 56.17,1543.28 51.87,1543.93 51.17,1545.61 53.75,1549.12 49.12,1553.75 45.61,1551.17 43.93,1551.87 43.28,1556.17 36.72,1556.17 36.07,1551.87 34.39,1551.17 30.88,1553.75 26.25,1549.12 28.83,1545.61 28.13,1543.93 23.83,1543.28 23.83,1536.72 28.13,1536.07 28.83,1534.39 26.25,1530.88 30.88,1526.25 34.39,1528.83 36.07,1528.13 36.72,1523.83 43.28,1523.83 43.93,1528.13 45.61,1528.83 49.12,1526.25 53.75,1530.88 51.17,1534.39 51.87,1536.07" fill="none" stroke="#ffffff" stroke-width="3" stroke-linejoin="round"/>
<circle cx="40" cy="1540" r="5" fill="none" stroke="#ffffff" stroke-width="3"/>
<circle cx="40" cy="1610" r="7.5" fill="none" stroke="#ffffff" stroke-width="3.5"/>
<path d="M25.5 1637 Q25.5 1622 40 1622 Q54.5 1622 54.5 1637 Z" fill="none" stroke="#ffffff" stroke-width="3.5" stroke-linejoin="round"/>
<path d="M35 1685 L27 1685 Q23.5 1685 23.5 1689 L23.5 1710 Q23.5 1714 27 1714 L35 1714" fill="none" stroke="#ffffff" stroke-width="3.5"/>
<path d="M32 1695 L43 1695 L43 1687 L56 1699.5 L43 1712 L43 1704 L32 1704 Z" fill="none" stroke="#ffffff" stroke-width="3.5" stroke-linejoin="round"/>
<circle cx="29" cy="1780.5" r="3.6" fill="#ffffff"/>
<circle cx="40" cy="1780.5" r="3.6" fill="#ffffff"/>
<circle cx="51" cy="1780.5" r="3.6" fill="#ffffff"/>
<path d="M194.8 2 L168.8 24.5 Q166.5 28.6 171 28.6 L174.3 28.6 L174.3 44.5 Q174.3 49.5 179.3 49.5 L211.2 49.5 Q216.2 49.5 216.2 44.5 L216.2 28.6 L219.5 28.6 Q224 28.6 221.5 24.5 Z" fill="#c4246a"/>
<polygon points="331.80,17.80 335.09,26.27 344.16,26.78 337.13,32.53 339.44,41.32 331.80,36.40 324.16,41.32 326.47,32.53 319.44,26.78 328.51,26.27" fill="none" stroke="#000" stroke-width="2.8" stroke-linejoin="round"/>
<path d="M902 23.5 L918 39.5 M918 23.5 L902 39.5" stroke="#000" stroke-width="2.6"/>
<path d="M3656 17 L3643.5 29 L3656 41" fill="none" stroke="#777" stroke-width="3"/>
<path d="M3706 17 L3718.5 29 L3706 41" fill="none" stroke="#777" stroke-width="3"/>
<path d="M3778 25 L3790.5 36.5 L3803 25" fill="none" stroke="#22395a" stroke-width="3.2"/>
<rect x="106.5" y="79" width="31.3" height="23.6" rx="3.5" fill="#464646"/>
<path d="M116 80 L118 75.5 L126 75.5 L128 80 Z" fill="#464646"/>
<circle cx="122" cy="90.6" r="7" fill="none" stroke="#fff" stroke-width="3"/>
<path d="M118 83.5 Q122 81.5 126 83.5 L125 85 Q122 84 119 85 Z" fill="#d23030"/>
<circle cx="132.9" cy="84" r="1.6" fill="#fff"/>
<rect x="160" y="74.5" width="19.8" height="18" fill="none" stroke="#464646" stroke-width="3.2"/>
<line x1="164.3" y1="80" x2="176" y2="80" stroke="#464646" stroke-width="2"/>
<line x1="164.3" y1="84" x2="176" y2="84" stroke="#464646" stroke-width="2"/>
<line x1="164.3" y1="88" x2="176" y2="88" stroke="#464646" stroke-width="2"/>
<rect x="154" y="91.2" width="32" height="14" fill="#464646"/>
<rect x="158.5" y="98" width="23.3" height="3" rx="1" fill="#fff"/>
<path d="M207 88.5 L218 78 L229 88.5" fill="none" stroke="#464646" stroke-width="5.2"/>
<line x1="218" y1="80" x2="218" y2="99" stroke="#464646" stroke-width="5"/>
<path d="M205 96 L205 102.8 L231.2 102.8 L231.2 96" fill="none" stroke="#464646" stroke-width="5"/>
<path d="M258.2 81.5 Q259.5 76 266 76 Q273.5 76 273.5 82.5 Q273.5 86.5 269.5 88.5 Q265.5 90.5 265.5 94.5" fill="none" stroke="#464646" stroke-width="5.2"/>
<circle cx="265.5" cy="100.2" r="3.1" fill="#464646"/>
<path d="M300 76.8 L309 76.8 L313 81.2 L328 81.2 L328 101 L300 101 Z" fill="none" stroke="#464646" stroke-width="3.4" stroke-linejoin="miter"/>
<path d="M367 102.5 Q364 103.6 361.8 103.6 A14.2 14.2 0 1 1 376 89.5 L375.8 92" fill="none" stroke="#505050" stroke-width="3"/>
<circle cx="361.8" cy="88.3" r="6.5" fill="none" stroke="#505050" stroke-width="3"/>
<line x1="366.5" y1="93" x2="376" y2="102.8" stroke="#505050" stroke-width="4"/>
<path d="M3612 87.5 L3618 93 L3624 87.5" fill="none" stroke="#464646" stroke-width="4.5"/>
<circle cx="3660.6" cy="83.6" r="8.5" fill="none" stroke="#464646" stroke-width="3.5"/>
<line x1="3666.5" y1="90" x2="3679.5" y2="102.5" stroke="#464646" stroke-width="5" stroke-linecap="round"/>
<path d="M3705 86 Q3712 78 3719 79 Q3729 80 3729 89 Q3729 98 3717 101" fill="none" stroke="#c9c9c9" stroke-width="4.5"/>
<path d="M3699 76.5 L3701 90 L3714 85 Z" fill="#c9c9c9"/>
<path d="M3752 75.3 L3766 75.3 L3771.5 81 L3771.5 103 L3752 103 Z" fill="none" stroke="#464646" stroke-width="3.6"/>
<path d="M3765.5 74.5 L3773 74.5 L3773 82 Z" fill="#464646"/>
<circle cx="3804" cy="83.6" r="8.5" fill="none" stroke="#c9c9c9" stroke-width="3.5"/>
<line x1="3810" y1="90" x2="3823.5" y2="102.5" stroke="#c9c9c9" stroke-width="5" stroke-linecap="round"/>
</svg></body></html>
